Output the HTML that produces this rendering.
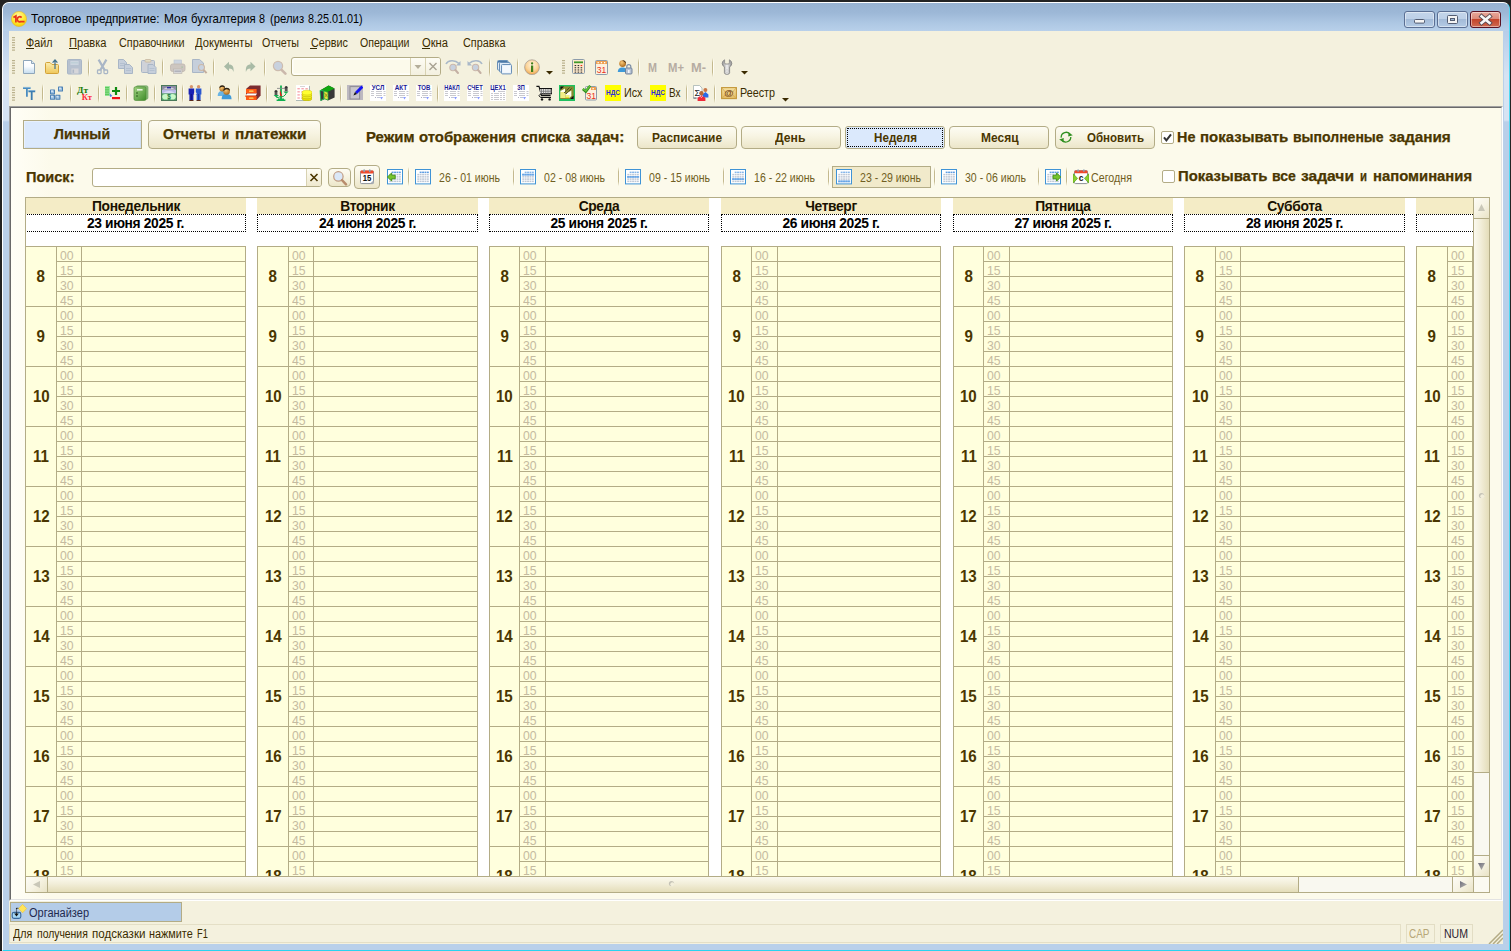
<!DOCTYPE html><html lang="ru"><head><meta charset="utf-8"><title>Торговое предприятие: Моя бухгалтерия 8</title><style>
*{box-sizing:border-box}
html,body{margin:0;padding:0}
body{width:1511px;height:951px;background:#232323;position:relative;overflow:hidden;font-family:"Liberation Sans",sans-serif;font-size:11px}
div,svg,span.t{position:absolute}
span.t{white-space:pre;transform-origin:0 0}
span.b{-webkit-text-stroke:.25px currentColor}
span.tw{position:absolute;left:0;top:0;font-size:0}
.sep{width:2px;height:20px;background:linear-gradient(90deg,#cfc8a4 0 1px,#fffef6 1px 2px);opacity:.9}
.grip{width:3px;background:repeating-linear-gradient(180deg,#b9b18c 0 1px,transparent 1px 2.5px)}
.btn{border:1px solid #b3ac86;border-radius:4px;background:linear-gradient(180deg,#fdfcf3 0%,#f7f4e2 45%,#ece6c9 100%)}
.hr{font-weight:bold;font-size:16.8px;color:#4a3600;text-align:center;line-height:60px;padding-top:1px}
.hr span{display:inline-block;transform:scaleX(.9)}
.mn{font-size:13.3px;color:#c5bba0;line-height:15px;padding-left:3px;padding-top:2px}
.mn span{display:inline-block;transform:scaleX(.92);transform-origin:0 50%}
.dn{letter-spacing:-.35px;font-weight:bold;font-size:13.8px;color:#1a1200;text-align:center;line-height:16px;padding-top:1px}
.dd{letter-spacing:-.35px;font-weight:bold;font-size:13.8px;color:#000;text-align:center;line-height:16px;padding-top:1px}
</style></head><body><div style="left:2px;top:2px;width:1508px;height:949px;background:#b9d0ea;border-radius:7px 7px 0 0;border:1px solid #fff;border-right-color:#4fd9f2;border-bottom-color:#29d3ef"></div><div style="left:3px;top:3px;width:1506px;height:28px;background:linear-gradient(180deg,#98b3d2 0%,#9db8d7 35%,#adc7e3 70%,#b8d0ea 100%);border-radius:6px 6px 0 0"></div><div style="left:3px;top:31px;width:6px;height:913px;background:linear-gradient(180deg,#b6cde8 0,#c4d7ee 20px,#d6e3f3 45px,#d6e3f3 89px,#b9cfe9 91px)"></div><div style="left:1503px;top:31px;width:6px;height:913px;background:linear-gradient(180deg,#b6cde8 0,#c4d7ee 20px,#d6e3f3 45px,#d6e3f3 89px,#b9cfe9 91px);border-left:1px solid #b9d0ea"></div><div style="left:9px;top:31px;width:1494px;height:913px;background:#f4f1de"></div><svg style="left:11px;top:11px;" width="16" height="16" viewBox="0 0 16 16"><defs><radialGradient id="g1c" cx="45%" cy="30%" r="75%"><stop offset="0" stop-color="#fff9a8"/><stop offset=".6" stop-color="#ffe62a"/><stop offset="1" stop-color="#f5c400"/></radialGradient></defs><circle cx="8" cy="8" r="7.6" fill="url(#g1c)" stroke="#e0b830" stroke-width=".6"/><path d="M2.4 6.4 L4.9 4.9 V11.4" fill="none" stroke="#e8321a" stroke-width="1.7"/><path d="M10.6 6.6 A2.5 2.5 0 1 0 9.6 10.6 H13.6" fill="none" stroke="#e8321a" stroke-width="1.7"/></svg><span class="tw"><span class="t" style="left:31.4px;top:13.33px;font-size:12.6px;line-height:12.6px;color:#000;transform:scaleX(0.9561);">Торговое</span> <span class="t" style="left:86px;top:13.33px;font-size:12.6px;line-height:12.6px;color:#000;transform:scaleX(0.9317);">предприятие:</span> <span class="t" style="left:163.8px;top:13.33px;font-size:12.6px;line-height:12.6px;color:#000;transform:scaleX(0.9481);">Моя</span> <span class="t" style="left:191px;top:13.33px;font-size:12.6px;line-height:12.6px;color:#000;transform:scaleX(0.9037);">бухгалтерия</span> <span class="t" style="left:259.2px;top:13.33px;font-size:12.6px;line-height:12.6px;color:#000;transform:scaleX(0.8552);">8</span> <span class="t" style="left:269.7px;top:13.33px;font-size:12.6px;line-height:12.6px;color:#000;transform:scaleX(0.8985);">(релиз</span> <span class="t" style="left:307.7px;top:13.33px;font-size:12.6px;line-height:12.6px;color:#000;transform:scaleX(0.8582);">8.25.01.01)</span></span><div style="left:1404px;top:11px;width:31px;height:17px;background:linear-gradient(180deg,#c3d5ea 0%,#bdd0e7 45%,#a3bbd8 50%,#b4cbe5 100%);border:1px solid #5b6f93;border-radius:3px;box-shadow:inset 0 0 0 1px rgba(255,255,255,.45)"></div><svg style="left:1404px;top:11px;" width="31" height="17" viewBox="0 0 31 17"><rect x="10.5" y="8.5" width="10" height="3.6" rx="1" fill="#f4f4f4" stroke="#535d72" stroke-width="1"/></svg><div style="left:1437px;top:11px;width:31px;height:17px;background:linear-gradient(180deg,#c3d5ea 0%,#bdd0e7 45%,#a3bbd8 50%,#b4cbe5 100%);border:1px solid #5b6f93;border-radius:3px;box-shadow:inset 0 0 0 1px rgba(255,255,255,.45)"></div><svg style="left:1437px;top:11px;" width="31" height="17" viewBox="0 0 31 17"><rect x="10.5" y="4.5" width="10" height="8" rx="1" fill="#f4f4f4" stroke="#535d72" stroke-width="1"/><rect x="13.5" y="7.5" width="4" height="2" fill="#9db7d6" stroke="#535d72" stroke-width="1"/></svg><div style="left:1470px;top:11px;width:31px;height:17px;background:linear-gradient(180deg,#e9a99b 0%,#dd8b7a 45%,#c4452b 50%,#cf6a50 100%);border:1px solid #5a1222;border-radius:3px;box-shadow:inset 0 0 0 1px rgba(255,255,255,.45)"></div><svg style="left:1470px;top:11px;" width="31" height="17" viewBox="0 0 31 17"><path d="M11.6 5.4 L19.6 12 M19.6 5.4 L11.6 12" stroke="#5a4a52" stroke-width="4.4" stroke-linecap="square"/><path d="M11.6 5.4 L19.6 12 M19.6 5.4 L11.6 12" stroke="#f8f8f8" stroke-width="2.6" stroke-linecap="square"/></svg><svg style="left:12px;top:37px;" width="3" height="14" viewBox="0 0 3 14"><rect x="0" y="0" width="3" height="1.2" fill="#b9b18c"/><rect x="0" y="2.5" width="3" height="1.2" fill="#b9b18c"/><rect x="0" y="5" width="3" height="1.2" fill="#b9b18c"/><rect x="0" y="7.5" width="3" height="1.2" fill="#b9b18c"/><rect x="0" y="10" width="3" height="1.2" fill="#b9b18c"/><rect x="0" y="12.5" width="3" height="1.2" fill="#b9b18c"/></svg><span class="t" style="left:25.5px;top:36.84px;font-size:12px;line-height:12px;color:#3a2c00;transform:scaleX(0.8978);">Файл</span><div style="left:26px;top:48px;width:8px;height:1px;background:#3a2c00"></div><span class="t" style="left:69px;top:36.84px;font-size:12px;line-height:12px;color:#3a2c00;transform:scaleX(0.9249);">Правка</span><div style="left:69px;top:48px;width:8px;height:1px;background:#3a2c00"></div><span class="t" style="left:118.5px;top:36.84px;font-size:12px;line-height:12px;color:#3a2c00;transform:scaleX(0.9009);">Справочники</span><span class="t" style="left:194.5px;top:36.84px;font-size:12px;line-height:12px;color:#3a2c00;transform:scaleX(0.9295);">Документы</span><span class="t" style="left:261.5px;top:36.84px;font-size:12px;line-height:12px;color:#3a2c00;transform:scaleX(0.8919);">Отчеты</span><span class="t" style="left:310.5px;top:36.84px;font-size:12px;line-height:12px;color:#3a2c00;transform:scaleX(0.9004);">Сервис</span><div style="left:310px;top:48px;width:7px;height:1px;background:#3a2c00"></div><span class="t" style="left:360px;top:36.84px;font-size:12px;line-height:12px;color:#3a2c00;transform:scaleX(0.8817);">Операции</span><span class="t" style="left:421.5px;top:36.84px;font-size:12px;line-height:12px;color:#3a2c00;transform:scaleX(0.9322);">Окна</span><div style="left:422px;top:48px;width:8px;height:1px;background:#3a2c00"></div><span class="t" style="left:462.5px;top:36.84px;font-size:12px;line-height:12px;color:#3a2c00;transform:scaleX(0.9028);">Справка</span><svg style="left:12px;top:60px;" width="3" height="14" viewBox="0 0 3 14"><rect x="0" y="0" width="3" height="1.2" fill="#b9b18c"/><rect x="0" y="2.5" width="3" height="1.2" fill="#b9b18c"/><rect x="0" y="5" width="3" height="1.2" fill="#b9b18c"/><rect x="0" y="7.5" width="3" height="1.2" fill="#b9b18c"/><rect x="0" y="10" width="3" height="1.2" fill="#b9b18c"/><rect x="0" y="12.5" width="3" height="1.2" fill="#b9b18c"/></svg><svg style="left:12px;top:87px;" width="3" height="14" viewBox="0 0 3 14"><rect x="0" y="0" width="3" height="1.2" fill="#b9b18c"/><rect x="0" y="2.5" width="3" height="1.2" fill="#b9b18c"/><rect x="0" y="5" width="3" height="1.2" fill="#b9b18c"/><rect x="0" y="7.5" width="3" height="1.2" fill="#b9b18c"/><rect x="0" y="10" width="3" height="1.2" fill="#b9b18c"/><rect x="0" y="12.5" width="3" height="1.2" fill="#b9b18c"/></svg><svg style="left:562px;top:60px;" width="3" height="14" viewBox="0 0 3 14"><rect x="0" y="0" width="3" height="1.2" fill="#b9b18c"/><rect x="0" y="2.5" width="3" height="1.2" fill="#b9b18c"/><rect x="0" y="5" width="3" height="1.2" fill="#b9b18c"/><rect x="0" y="7.5" width="3" height="1.2" fill="#b9b18c"/><rect x="0" y="10" width="3" height="1.2" fill="#b9b18c"/><rect x="0" y="12.5" width="3" height="1.2" fill="#b9b18c"/></svg><div style="left:88px;top:58px;width:1px;height:19px;background:linear-gradient(180deg,rgba(190,180,140,0),#c4b98e 25%,#c4b98e 75%,rgba(190,180,140,0))"></div><div style="left:89px;top:58px;width:1px;height:19px;background:linear-gradient(180deg,rgba(255,255,255,0),#fffdf4 25%,#fffdf4 75%,rgba(255,255,255,0))"></div><div style="left:162px;top:58px;width:1px;height:19px;background:linear-gradient(180deg,rgba(190,180,140,0),#c4b98e 25%,#c4b98e 75%,rgba(190,180,140,0))"></div><div style="left:163px;top:58px;width:1px;height:19px;background:linear-gradient(180deg,rgba(255,255,255,0),#fffdf4 25%,#fffdf4 75%,rgba(255,255,255,0))"></div><div style="left:213px;top:58px;width:1px;height:19px;background:linear-gradient(180deg,rgba(190,180,140,0),#c4b98e 25%,#c4b98e 75%,rgba(190,180,140,0))"></div><div style="left:214px;top:58px;width:1px;height:19px;background:linear-gradient(180deg,rgba(255,255,255,0),#fffdf4 25%,#fffdf4 75%,rgba(255,255,255,0))"></div><div style="left:264px;top:58px;width:1px;height:19px;background:linear-gradient(180deg,rgba(190,180,140,0),#c4b98e 25%,#c4b98e 75%,rgba(190,180,140,0))"></div><div style="left:265px;top:58px;width:1px;height:19px;background:linear-gradient(180deg,rgba(255,255,255,0),#fffdf4 25%,#fffdf4 75%,rgba(255,255,255,0))"></div><div style="left:489px;top:58px;width:1px;height:19px;background:linear-gradient(180deg,rgba(190,180,140,0),#c4b98e 25%,#c4b98e 75%,rgba(190,180,140,0))"></div><div style="left:490px;top:58px;width:1px;height:19px;background:linear-gradient(180deg,rgba(255,255,255,0),#fffdf4 25%,#fffdf4 75%,rgba(255,255,255,0))"></div><div style="left:517px;top:58px;width:1px;height:19px;background:linear-gradient(180deg,rgba(190,180,140,0),#c4b98e 25%,#c4b98e 75%,rgba(190,180,140,0))"></div><div style="left:518px;top:58px;width:1px;height:19px;background:linear-gradient(180deg,rgba(255,255,255,0),#fffdf4 25%,#fffdf4 75%,rgba(255,255,255,0))"></div><div style="left:638px;top:58px;width:1px;height:19px;background:linear-gradient(180deg,rgba(190,180,140,0),#c4b98e 25%,#c4b98e 75%,rgba(190,180,140,0))"></div><div style="left:639px;top:58px;width:1px;height:19px;background:linear-gradient(180deg,rgba(255,255,255,0),#fffdf4 25%,#fffdf4 75%,rgba(255,255,255,0))"></div><div style="left:712px;top:58px;width:1px;height:19px;background:linear-gradient(180deg,rgba(190,180,140,0),#c4b98e 25%,#c4b98e 75%,rgba(190,180,140,0))"></div><div style="left:713px;top:58px;width:1px;height:19px;background:linear-gradient(180deg,rgba(255,255,255,0),#fffdf4 25%,#fffdf4 75%,rgba(255,255,255,0))"></div><div style="left:42px;top:84px;width:1px;height:19px;background:linear-gradient(180deg,rgba(190,180,140,0),#c4b98e 25%,#c4b98e 75%,rgba(190,180,140,0))"></div><div style="left:43px;top:84px;width:1px;height:19px;background:linear-gradient(180deg,rgba(255,255,255,0),#fffdf4 25%,#fffdf4 75%,rgba(255,255,255,0))"></div><div style="left:70px;top:84px;width:1px;height:19px;background:linear-gradient(180deg,rgba(190,180,140,0),#c4b98e 25%,#c4b98e 75%,rgba(190,180,140,0))"></div><div style="left:71px;top:84px;width:1px;height:19px;background:linear-gradient(180deg,rgba(255,255,255,0),#fffdf4 25%,#fffdf4 75%,rgba(255,255,255,0))"></div><div style="left:98px;top:84px;width:1px;height:19px;background:linear-gradient(180deg,rgba(190,180,140,0),#c4b98e 25%,#c4b98e 75%,rgba(190,180,140,0))"></div><div style="left:99px;top:84px;width:1px;height:19px;background:linear-gradient(180deg,rgba(255,255,255,0),#fffdf4 25%,#fffdf4 75%,rgba(255,255,255,0))"></div><div style="left:126px;top:84px;width:1px;height:19px;background:linear-gradient(180deg,rgba(190,180,140,0),#c4b98e 25%,#c4b98e 75%,rgba(190,180,140,0))"></div><div style="left:127px;top:84px;width:1px;height:19px;background:linear-gradient(180deg,rgba(255,255,255,0),#fffdf4 25%,#fffdf4 75%,rgba(255,255,255,0))"></div><div style="left:154px;top:84px;width:1px;height:19px;background:linear-gradient(180deg,rgba(190,180,140,0),#c4b98e 25%,#c4b98e 75%,rgba(190,180,140,0))"></div><div style="left:155px;top:84px;width:1px;height:19px;background:linear-gradient(180deg,rgba(255,255,255,0),#fffdf4 25%,#fffdf4 75%,rgba(255,255,255,0))"></div><div style="left:182px;top:84px;width:1px;height:19px;background:linear-gradient(180deg,rgba(190,180,140,0),#c4b98e 25%,#c4b98e 75%,rgba(190,180,140,0))"></div><div style="left:183px;top:84px;width:1px;height:19px;background:linear-gradient(180deg,rgba(255,255,255,0),#fffdf4 25%,#fffdf4 75%,rgba(255,255,255,0))"></div><div style="left:210px;top:84px;width:1px;height:19px;background:linear-gradient(180deg,rgba(190,180,140,0),#c4b98e 25%,#c4b98e 75%,rgba(190,180,140,0))"></div><div style="left:211px;top:84px;width:1px;height:19px;background:linear-gradient(180deg,rgba(255,255,255,0),#fffdf4 25%,#fffdf4 75%,rgba(255,255,255,0))"></div><div style="left:238px;top:84px;width:1px;height:19px;background:linear-gradient(180deg,rgba(190,180,140,0),#c4b98e 25%,#c4b98e 75%,rgba(190,180,140,0))"></div><div style="left:239px;top:84px;width:1px;height:19px;background:linear-gradient(180deg,rgba(255,255,255,0),#fffdf4 25%,#fffdf4 75%,rgba(255,255,255,0))"></div><div style="left:266px;top:84px;width:1px;height:19px;background:linear-gradient(180deg,rgba(190,180,140,0),#c4b98e 25%,#c4b98e 75%,rgba(190,180,140,0))"></div><div style="left:267px;top:84px;width:1px;height:19px;background:linear-gradient(180deg,rgba(255,255,255,0),#fffdf4 25%,#fffdf4 75%,rgba(255,255,255,0))"></div><div style="left:340px;top:84px;width:1px;height:19px;background:linear-gradient(180deg,rgba(190,180,140,0),#c4b98e 25%,#c4b98e 75%,rgba(190,180,140,0))"></div><div style="left:341px;top:84px;width:1px;height:19px;background:linear-gradient(180deg,rgba(255,255,255,0),#fffdf4 25%,#fffdf4 75%,rgba(255,255,255,0))"></div><div style="left:437px;top:84px;width:1px;height:19px;background:linear-gradient(180deg,rgba(190,180,140,0),#c4b98e 25%,#c4b98e 75%,rgba(190,180,140,0))"></div><div style="left:438px;top:84px;width:1px;height:19px;background:linear-gradient(180deg,rgba(255,255,255,0),#fffdf4 25%,#fffdf4 75%,rgba(255,255,255,0))"></div><div style="left:686px;top:84px;width:1px;height:19px;background:linear-gradient(180deg,rgba(190,180,140,0),#c4b98e 25%,#c4b98e 75%,rgba(190,180,140,0))"></div><div style="left:687px;top:84px;width:1px;height:19px;background:linear-gradient(180deg,rgba(255,255,255,0),#fffdf4 25%,#fffdf4 75%,rgba(255,255,255,0))"></div><div style="left:714px;top:84px;width:1px;height:19px;background:linear-gradient(180deg,rgba(190,180,140,0),#c4b98e 25%,#c4b98e 75%,rgba(190,180,140,0))"></div><div style="left:715px;top:84px;width:1px;height:19px;background:linear-gradient(180deg,rgba(255,255,255,0),#fffdf4 25%,#fffdf4 75%,rgba(255,255,255,0))"></div><svg style="left:22px;top:59px;" width="16" height="16" viewBox="0 0 16 16"><defs><linearGradient id="gd" x1="0" y1="0" x2="0" y2="1"><stop offset="0" stop-color="#fff"/><stop offset=".45" stop-color="#fafcfe"/><stop offset="1" stop-color="#c4dcef"/></linearGradient></defs><path d="M1.5 1.5 H9.5 L12.5 4.5 V14.5 H1.5 Z" fill="url(#gd)" stroke="#8fa6ba"/><path d="M9.5 1.5 V4.5 H12.5" fill="#dde9f3" stroke="#8fa6ba"/></svg><svg style="left:44px;top:59px;" width="16" height="16" viewBox="0 0 16 16"><defs><linearGradient id="gf" x1="0" y1="0" x2="0" y2="1"><stop offset="0" stop-color="#fbeeb0"/><stop offset="1" stop-color="#efc75a"/></linearGradient></defs><path d="M1.5 4.5 Q1.5 3.5 2.5 3.5 H6 L8 5.5 H13.5 Q14.5 5.5 14.5 6.5 V13.5 Q14.5 14.5 13.5 14.5 H2.5 Q1.5 14.5 1.5 13.5 Z" fill="url(#gf)" stroke="#d3a238"/><path d="M11 10 V1.5 M8.6 3.6 L11 1 L13.4 3.6" fill="none" stroke="#3f6f8c" stroke-width="1.2"/></svg><svg style="left:67px;top:59px;" width="16" height="16" viewBox="0 0 16 16"><rect x=".5" y=".5" width="14" height="14.5" rx="1" fill="#b7c1cf" stroke="#a9b6c6"/><rect x="3" y="1.5" width="9" height="5" fill="#ccd5df" stroke="#b0bccb" stroke-width=".6"/><rect x="4" y="3" width="7" height="1.4" fill="#bfd0d8"/><rect x="4.5" y="9.5" width="7" height="5" fill="#d6d6da"/><rect x="5.5" y="10.5" width="1.6" height="3.4" fill="#aeb7c6"/></svg><svg style="left:96px;top:59px;" width="16" height="16" viewBox="0 0 16 16"><path d="M2.6 0.6 L9.2 12 M10.4 0.6 L3.8 12" stroke="#a9b6c6" stroke-width="2.2"/><rect x="1.5" y="11" width="3.6" height="3.6" rx=".8" fill="#f4f1de" stroke="#a9b6c6" stroke-width="1.3"/><rect x="8" y="11" width="3.6" height="3.6" rx=".8" fill="#f4f1de" stroke="#a9b6c6" stroke-width="1.3"/></svg><svg style="left:118px;top:59px;" width="16" height="16" viewBox="0 0 16 16"><path d="M0.5 0.5 H5.5 L8.5 3.5 V9.5 H0.5 Z" fill="#c6cfdb" stroke="#a9b6c6"/><rect x="2" y="4" width="5" height="1" fill="#b4c0d0"/><rect x="2" y="6" width="5" height="1" fill="#b4c0d0"/><path d="M6.5 5.5 H11.5 L14.5 8.5 V14.5 H6.5 Z" fill="#c6cfdb" stroke="#a9b6c6"/><rect x="8" y="9" width="5" height="1" fill="#b4c0d0"/><rect x="8" y="11" width="5" height="1" fill="#b4c0d0"/></svg><svg style="left:141px;top:59px;" width="16" height="16" viewBox="0 0 16 16"><rect x=".5" y="1.5" width="13" height="12" rx="1" fill="#cfd2d8" stroke="#a9b6c6"/><rect x="4" y=".5" width="6" height="2.6" rx="1" fill="#e2dcc4" stroke="#c8b8a0" stroke-width=".8"/><path d="M7.0 5.5 H12.0 L15.0 8.5 V14.5 H7.0 Z" fill="#c6cfdb" stroke="#a9b6c6"/><rect x="8.5" y="9" width="5" height="1" fill="#b4c0d0"/><rect x="8.5" y="11" width="5" height="1" fill="#b4c0d0"/></svg><svg style="left:170px;top:59px;" width="16" height="16" viewBox="0 0 16 16"><rect x="4" y="1" width="7.5" height="5" fill="#ccd4df" stroke="#b9c3d0" stroke-width=".6"/><rect x=".5" y="5" width="14.5" height="7.5" rx="2" fill="#cdc6c0" stroke="#bfb6ae" stroke-width=".8"/><rect x="3.5" y="10" width="8.5" height="4.5" fill="#d6d6d8" stroke="#b8b2ac" stroke-width=".6"/><rect x="4.5" y="11.5" width="6.5" height="1.4" fill="#aeb0b8"/><rect x="11.5" y="7.5" width="1.2" height="1.2" fill="#9ac09a"/></svg><svg style="left:192px;top:59px;" width="16" height="16" viewBox="0 0 16 16"><path d="M.5 .5 H7.5 L11.5 4 V13.5 H.5 Z" fill="#c6cfdb" stroke="#a9b6c6"/><circle cx="9.5" cy="8.5" r="3" fill="#c9d3e0" stroke="#cdb8a4" stroke-width="1.1"/><path d="M11.6 10.8 L14.6 14.2" stroke="#c4ae9e" stroke-width="2"/></svg><svg style="left:223px;top:59px;" width="16" height="16" viewBox="0 0 16 16"><path d="M1 7.5 L6 2.8 V5.6 C9.5 5.6 11 8 10.6 13 C9.8 10.4 8.8 9.4 6 9.4 V12.2 Z" fill="#a9bba6"/></svg><svg style="left:244px;top:59px;" width="16" height="16" viewBox="0 0 16 16"><path d="M11.5 7.5 L6.5 2.8 V5.6 C3 5.6 1.5 8 1.9 13 C2.7 10.4 3.7 9.4 6.5 9.4 V12.2 Z" fill="#a9bba6"/></svg><svg style="left:272px;top:59px;" width="16" height="16" viewBox="0 0 16 16"><circle cx="6" cy="7" r="4.6" fill="#c8d1de" stroke="#cdbcae" stroke-width="1.2"/><path d="M9.6 10.8 L13.4 14.6" stroke="#cbb8ac" stroke-width="2.6" stroke-linecap="round"/></svg><div style="left:291px;top:57px;width:150px;height:19px;background:#fcfaeb;border:1px solid #b3ac86;border-radius:3px;box-shadow:inset 0 0 0 1.5px #fffffb"></div><div style="left:411px;top:58px;width:29px;height:17px;background:linear-gradient(180deg,#fdfcf4,#f3f0df);border-radius:0 2px 2px 0"></div><div style="left:410px;top:58px;width:1px;height:17px;background:#d8d2b2"></div><div style="left:425px;top:58px;width:1px;height:17px;background:#d8d2b2"></div><svg style="left:411px;top:58px;" width="14" height="17" viewBox="0 0 14 17"><path d="M3.5 7 H10.5 L7 11 Z" fill="#b4ae9a"/></svg><svg style="left:426px;top:58px;" width="14" height="17" viewBox="0 0 14 17"><path d="M3.5 5 L10.5 12 M10.5 5 L3.5 12" stroke="#a8a292" stroke-width="1.4"/></svg><svg style="left:445px;top:59px;" width="16" height="16" viewBox="0 0 16 16"><path d="M1 5 C3 1 10 0.5 14 4.5" fill="none" stroke="#a9b8c8" stroke-width="1.6"/><path d="M15.5 2 V6.5 H11 Z" fill="#a9b8c8"/><circle cx="8" cy="8.5" r="3.2" fill="#c8d1de" stroke="#cbb8ac" stroke-width="1.1"/><path d="M10.4 11 L13 14" stroke="#c4b0a4" stroke-width="2" stroke-linecap="round"/></svg><svg style="left:467px;top:59px;" width="16" height="16" viewBox="0 0 16 16"><path d="M15 5 C13 1 6 0.5 2 4.5" fill="none" stroke="#a9b8c8" stroke-width="1.6"/><path d="M.5 2 V6.5 H5 Z" fill="#a9b8c8"/><circle cx="8.5" cy="8.5" r="3.2" fill="#c8d1de" stroke="#cbb8ac" stroke-width="1.1"/><path d="M11 11 L13.6 14" stroke="#c4b0a4" stroke-width="2" stroke-linecap="round"/></svg><svg style="left:496px;top:59px;" width="16" height="16" viewBox="0 0 16 16"><rect x="1.5" y="1.5" width="10.6" height="9.6" rx="1" fill="#dfeaf6" stroke="#6a90b8"/><rect x="2" y="2" width="9.6" height="1.6" fill="#4a78a6"/><rect x="3.5" y="3.5" width="10.6" height="9.6" rx="1" fill="#dfeaf6" stroke="#6a90b8"/><rect x="5.5" y="5.5" width="10" height="9.4" rx="1" fill="#e6f0fa" stroke="#6a90b8"/><rect x="6.6" y="7" width="7.8" height="6.6" fill="#f4f8fd"/></svg><svg style="left:524px;top:59px;" width="16" height="16" viewBox="0 0 16 16"><defs><radialGradient id="gi" cx="50%" cy="35%" r="65%"><stop offset="0" stop-color="#fff3dc"/><stop offset=".6" stop-color="#fbd49a"/><stop offset="1" stop-color="#f0a648"/></radialGradient></defs><circle cx="8" cy="8.2" r="7.4" fill="url(#gi)" stroke="#a8a098" stroke-width=".8"/><rect x="7" y="6.5" width="2.2" height="6.5" fill="#3f7f1c"/><rect x="7" y="3.2" width="2.2" height="2.2" rx="1" fill="#3f7f1c"/></svg><svg style="left:546px;top:71px;" width="7" height="4" viewBox="0 0 7 4"><path d="M0 0 H7 L3.5 3.6 Z" fill="#3a2a00"/></svg><svg style="left:572px;top:59px;" width="16" height="16" viewBox="0 0 16 16"><rect x=".5" y=".5" width="12" height="14" rx="1" fill="#fde9cc" stroke="#8c9cab"/><rect x="2" y="2.4" width="9" height="1.8" fill="#3f9a2a"/><rect x="2.6" y="6.0" width="1.6" height="1.1" fill="#333"/><rect x="5.6" y="6.0" width="1.6" height="1.1" fill="#333"/><rect x="8.6" y="6.0" width="1.6" height="1.1" fill="#e8301a"/><rect x="2.6" y="8.2" width="1.6" height="1.1" fill="#333"/><rect x="5.6" y="8.2" width="1.6" height="1.1" fill="#333"/><rect x="8.6" y="8.2" width="1.6" height="1.1" fill="#333"/><rect x="2.6" y="10.4" width="1.6" height="1.1" fill="#333"/><rect x="5.6" y="10.4" width="1.6" height="1.1" fill="#333"/><rect x="8.6" y="10.4" width="1.6" height="1.1" fill="#333"/><rect x="2.6" y="12.600000000000001" width="1.6" height="1.1" fill="#333"/><rect x="5.6" y="12.600000000000001" width="1.6" height="1.1" fill="#333"/><rect x="8.6" y="12.600000000000001" width="1.6" height="1.1" fill="#333"/></svg><svg style="left:594px;top:59px;" width="16" height="16" viewBox="0 0 16 16"><rect x="1.5" y="1.5" width="12" height="14" rx="1" fill="#fdf1de" stroke="#8c9cab"/><rect x="2" y="2" width="11" height="3" fill="#f0a050"/><rect x="3.5" y="3" width="1.3" height="1.3" fill="#fff"/><rect x="6.8" y="3" width="1.3" height="1.3" fill="#fff"/><rect x="10" y="3" width="1.3" height="1.3" fill="#fff"/><text x="7.6" y="14" font-family="Liberation Sans, sans-serif" font-size="9.5" text-anchor="middle" fill="#e8301a" textLength="9.5" lengthAdjust="spacingAndGlyphs">31</text></svg><svg style="left:617px;top:59px;" width="16" height="16" viewBox="0 0 16 16"><defs><radialGradient id="gh" cx="40%" cy="35%" r="70%"><stop offset="0" stop-color="#f8c878"/><stop offset="1" stop-color="#a86414"/></radialGradient></defs><circle cx="5.6" cy="4.6" r="3.4" fill="url(#gh)"/><path d="M5.2 1.2 A3.4 3.4 0 0 1 9 4.4 L7.6 3 Z" fill="#3a2a18"/><path d="M.8 13 C.8 9.5 3 8.4 5.6 8.4 C8.2 8.4 10 9.5 10 13 Z" fill="#3f9ad8"/><rect x="8.5" y="9" width="6.5" height="6" rx="1" fill="#b8c4d4" stroke="#6a7c94" stroke-width=".9"/><path d="M9.8 9 V7.6 A2 2 0 0 1 13.8 7.6 V9" fill="none" stroke="#7a8ca4" stroke-width="1.2"/><rect x="11" y="11" width="1.6" height="3" fill="#f4f6fa"/></svg><span class="t" style="left:648px;top:61.00px;font-size:13px;line-height:13px;color:#b6aca2;font-weight:bold;transform:scaleX(0.8300);">M</span><span class="t" style="left:668px;top:61.00px;font-size:13px;line-height:13px;color:#b6aca2;font-weight:bold;transform:scaleX(0.8685);">M+</span><span class="t" style="left:691px;top:61.00px;font-size:13px;line-height:13px;color:#b6aca2;font-weight:bold;transform:scaleX(0.9887);">M-</span><svg style="left:719px;top:59px;" width="16" height="16" viewBox="0 0 16 16"><defs><linearGradient id="gw" x1="0" y1="0" x2="1" y2="0"><stop offset="0" stop-color="#8e8e8e"/><stop offset=".5" stop-color="#f2f2f2"/><stop offset="1" stop-color="#8a8a8a"/></linearGradient></defs><path d="M5.6 .8 V3.6 Q5.6 5 6.8 5 H9.2 Q10.4 5 10.4 3.6 V.8 Q12.8 2 12.8 4.4 Q12.8 6.8 10.6 7.8 V13.8 Q10.6 15.4 8 15.4 Q5.4 15.4 5.4 13.8 V7.8 Q3.2 6.8 3.2 4.4 Q3.2 2 5.6 .8 Z" fill="url(#gw)" stroke="#808080" stroke-width=".8"/><rect x="7.2" y="10.6" width="1.6" height="3.2" rx=".8" fill="#fff" stroke="#9a9a9a" stroke-width=".4"/></svg><svg style="left:741px;top:71px;" width="7" height="4" viewBox="0 0 7 4"><path d="M0 0 H7 L3.5 3.6 Z" fill="#3a2a00"/></svg><svg style="left:22px;top:85px;" width="16" height="16" viewBox="0 0 16 16"><path d="M1 2.4 H8.6 V4 H5.8 V11.8 H4 V4 H1 Z" fill="#4a8cc0"/><path d="M6.4 5.6 H13.2 V7.2 H10.6 V15 H8.8 V7.2 H6.4 Z" fill="#3a7cb0"/><path d="M1 2.4 H8.6 M6.4 5.6 H13.2" stroke="#7ab0d8" stroke-width=".8"/></svg><svg style="left:49px;top:85px;" width="16" height="16" viewBox="0 0 16 16"><rect x="9" y="1.6" width="5" height="5" rx=".6" fill="#4a7fb4"/><rect x="10" y="2.6" width="3" height="3" fill="#9cc0e0"/><rect x="10" y="2.6" width="2" height="1.6" fill="#cfe2f4"/><rect x="1" y="4.4" width="5" height="5" rx=".6" fill="#4a7fb4"/><rect x="2" y="5.4" width="3" height="3" fill="#9cc0e0"/><rect x="2" y="5.4" width="2" height="1.6" fill="#cfe2f4"/><rect x="1" y="9.8" width="5" height="5" rx=".6" fill="#4a7fb4"/><rect x="2" y="10.8" width="3" height="3" fill="#9cc0e0"/><rect x="2" y="10.8" width="2" height="1.6" fill="#cfe2f4"/><rect x="6.4" y="9.8" width="5" height="5" rx=".6" fill="#4a7fb4"/><rect x="7.4" y="10.8" width="3" height="3" fill="#9cc0e0"/><rect x="7.4" y="10.8" width="2" height="1.6" fill="#cfe2f4"/></svg><svg style="left:76px;top:85px;" width="16" height="16" viewBox="0 0 16 16"><text x="1" y="7.6" font-family="Liberation Serif, serif" font-size="9" font-weight="bold" fill="#1a7a0a" textLength="11" lengthAdjust="spacingAndGlyphs">Дт</text><text x="5.8" y="15" font-family="Liberation Serif, serif" font-size="9" font-weight="bold" fill="#ff2a3a" textLength="10.2" lengthAdjust="spacingAndGlyphs">Кт</text></svg><svg style="left:104px;top:85px;" width="16" height="16" viewBox="0 0 16 16"><rect x="1" y="1" width="5" height="10" fill="#9fe89f"/><path d="M2 2 V11 M4 2 V11" stroke="#18a818" stroke-width="1" stroke-dasharray="1.4 .8"/><path d="M5.6 8 L8.4 11 L6 12 Z" fill="#4a7ae0"/><path d="M8 6 H16 M12 2 V10" stroke="#108a10" stroke-width="2.2"/><rect x="8" y="12" width="8" height="2.2" fill="#f0101a"/></svg><svg style="left:133px;top:85px;" width="16" height="16" viewBox="0 0 16 16"><defs><linearGradient id="gb" x1="0" y1="0" x2="1" y2="1"><stop offset="0" stop-color="#a4d484"/><stop offset="1" stop-color="#3f8c2a"/></linearGradient></defs><rect x="3" y=".8" width="12" height="13.4" rx="1.5" fill="#8cbc7c" stroke="#6a9c5a" stroke-width=".6"/><rect x="1" y="1.8" width="12" height="13.6" rx="1.5" fill="url(#gb)" stroke="#4a8a34" stroke-width=".7"/><rect x="4" y="4" width="5.6" height="1.6" fill="#e8f4e0"/><rect x="3" y="7.5" width="2" height="1" fill="#2a5a1a"/><rect x="3" y="10.5" width="2" height="1" fill="#2a5a1a"/></svg><svg style="left:161px;top:85px;" width="16" height="16" viewBox="0 0 16 16"><rect x=".5" y=".5" width="15" height="15" fill="#5a9a6a" stroke="#4a7a5a"/><rect x="1" y="1" width="14" height="4" fill="#8c8ca4"/><path d="M1.5 4.6 Q8 0 14.5 4.6 Z" fill="#d0d0e0"/><rect x="6" y="2" width="4" height="1.4" fill="#2a2aa0"/><rect x="1" y="5" width="14" height="3.4" fill="#b8b8e8"/><path d="M1.5 8.2 Q8 3.8 14.5 8.2 Z" fill="#d8d8f8"/><rect x="1" y="8.6" width="14" height="6.4" fill="#58a870"/><ellipse cx="4.6" cy="11.8" rx="3.4" ry="2.8" fill="#c8f8c8"/><ellipse cx="11.4" cy="11.8" rx="3.4" ry="2.8" fill="#c8f8c8"/><text x="8" y="14.4" font-family="Liberation Sans, sans-serif" font-size="6.5" font-weight="bold" text-anchor="middle" fill="#2a7a4a">$</text></svg><svg style="left:188px;top:85px;" width="16" height="16" viewBox="0 0 16 16"><circle cx="3.4" cy="1.8" r="1.7" fill="#d8956a"/><path d="M0.6 3.6 H6.2 V9.4 H5.4 V15.4 H1.4 V9.4 H0.6 Z" fill="#1a22b4"/><path d="M3.3 9 V15.4" stroke="#10106a" stroke-width=".7"/><rect x="1.4" y="15" width="4" height="1" fill="#5a2a1a"/><circle cx="10.6" cy="1.8" r="1.7" fill="#d8956a"/><path d="M7.8 3.6 H13.4 V9.4 H12.600000000000001 V15.4 H8.6 V9.4 H7.8 Z" fill="#2a58d0"/><path d="M10.5 9 V15.4" stroke="#1a2a90" stroke-width=".7"/><rect x="8.6" y="15" width="4" height="1" fill="#5a2a1a"/><path d="M5.6 8.4 L7.6 7 L9 8.6 L7 9.6 Z" fill="#f4ece4"/></svg><svg style="left:217px;top:85px;" width="16" height="16" viewBox="0 0 16 16"><path d="M0.7000000000000002 11.1 C0.7000000000000002 6.9 2.9000000000000004 5.9 5.2 5.9 C7.5 5.9 9.7 6.9 9.7 11.1 Z" fill="#6ab4e4"/><circle cx="5.2" cy="3.6" r="2.9" fill="url(#gh)"/><path d="M2.3000000000000003 3.2 A2.9 2.9 0 0 1 8.1 3.2 L7.1 2.2 Q5.2 1.1 3.3000000000000003 2.6 Z" fill="#2e2216"/><path d="M4.699999999999999 14.299999999999999 C4.699999999999999 10.1 6.8999999999999995 9.1 9.6 9.1 C12.299999999999999 9.1 14.499999999999998 10.1 14.499999999999998 14.299999999999999 Z" fill="#3f9ad8"/><circle cx="9.6" cy="6.4" r="3.3" fill="url(#gh)"/><path d="M6.3 6.0 A3.3 3.3 0 0 1 12.899999999999999 6.0 L11.899999999999999 5.0 Q9.6 3.5000000000000004 7.3 5.4 Z" fill="#2e2216"/></svg><svg style="left:245px;top:85px;" width="16" height="16" viewBox="0 0 16 16"><path d="M1 4 L5 .6 H15.6 V10.6 L11.6 15 H1 Z" fill="#7c2c30"/><rect x="1" y="4" width="10.6" height="4.4" fill="#ff5a14"/><rect x="1" y="11" width="10.6" height="4" fill="#ff5a14"/><path d="M0 10.8 L2.4 8.4 H12 L10.6 10.8 Z" fill="#fff"/><rect x="0" y="10.6" width="11" height="1" fill="#e04a10"/><rect x="4" y="5.6" width="4.6" height="1.2" rx=".6" fill="#ffe060"/><rect x="4" y="12.6" width="4.6" height="1.2" rx=".6" fill="#ffe060"/></svg><svg style="left:273px;top:85px;" width="16" height="16" viewBox="0 0 16 16"><path d="M8 .6 V14 M3.6 15.4 H12.4 M5 14.4 H11" stroke="#10b050" stroke-width="1.8"/><path d="M4 3.4 H13" stroke="#8a8a8a" stroke-width=".9"/><path d="M7 5 L9 11 L8 13 L6.8 9 Z" fill="#f0181a"/><path d="M0.6 10 H6 L3.4 12.6 Z M10.4 6.4 H15.6 L13 9 Z" fill="#10b050"/><path d="M3.4 12.6 Q6 13 8 11 M13 9 Q11 12 8 12" fill="none" stroke="#10b050" stroke-width="1"/><circle cx="3" cy="6.4" r="1.5" fill="#333"/><rect x="1.6" y="7.4" width="2.8" height="2.6" fill="#555"/><circle cx="13.2" cy="2.4" r="1.5" fill="#333"/><rect x="11.8" y="3.4" width="2.8" height="3" fill="#555"/></svg><svg style="left:296px;top:85px;" width="16" height="16" viewBox="0 0 16 16"><rect x="0" y="0" width="13" height="15.4" fill="#fff"/><rect x="13" y="1" width=".8" height="14" fill="#9aa"/><rect x="0" y="15" width="13" height=".8" fill="#9aa"/><rect x="4" y="1" width="5" height=".8" fill="#ccc"/><rect x="1.4" y="3.0" width="2.4" height="1.4" fill="#f8a8b0"/><rect x="5.4" y="3.0" width="2.4" height="1.4" fill="#f8a8b0"/><rect x="9.4" y="3.0" width="2.4" height="1.4" fill="#f8a8b0"/><rect x="1.4" y="6.1" width="2.4" height="1.4" fill="#f8a8b0"/><rect x="5.4" y="6.1" width="2.4" height="1.4" fill="#f8a8b0"/><rect x="9.4" y="6.1" width="2.4" height="1.4" fill="#f8a8b0"/><rect x="1.4" y="9.2" width="2.4" height="1.4" fill="#f8a8b0"/><rect x="5.4" y="9.2" width="2.4" height="1.4" fill="#f8a8b0"/><rect x="9.4" y="9.2" width="2.4" height="1.4" fill="#f8a8b0"/><rect x="1.4" y="12.3" width="2.4" height="1.4" fill="#f8a8b0"/><rect x="5.4" y="12.3" width="2.4" height="1.4" fill="#f8a8b0"/><rect x="9.4" y="12.3" width="2.4" height="1.4" fill="#f8a8b0"/><ellipse cx="11" cy="13.4" rx="5" ry="2.4" fill="#e8e000" stroke="#b0a800" stroke-width=".5"/><ellipse cx="11" cy="11.4" rx="5" ry="2.4" fill="#f4f020" stroke="#b0a800" stroke-width=".5"/><ellipse cx="11" cy="9.4" rx="5" ry="2.4" fill="#f4f020" stroke="#b0a800" stroke-width=".5"/><ellipse cx="11" cy="7.6" rx="5" ry="2.4" fill="#ffff30" stroke="#c8c000" stroke-width=".5"/></svg><svg style="left:319px;top:85px;" width="16" height="16" viewBox="0 0 16 16"><path d="M1 5.4 L9.6 .4 L15.6 3.6 V12.6 L9 15.6 L6 14 L1.6 16 Z" fill="#383838"/><path d="M1 5.4 L9.6 .4 L15.6 3.6 L8.4 7 L5 5.6 Z" fill="#10a810"/><path d="M1 5.4 L1.8 15.6 L5 13.6 V6 Z" fill="#383838" stroke="#20d060" stroke-width=".8"/><path d="M5 6 L9 7.4 V15 L5 13.6 Z" fill="#e8e040"/><path d="M5 6 L9 7.4 V15 L5 13.6 Z" fill="none" stroke="#20c040" stroke-width=".7"/><path d="M5.6 8 L8.4 12 M8.4 8.6 L5.6 12.4" stroke="#8a7a10" stroke-width=".7"/></svg><svg style="left:347px;top:85px;" width="16" height="16" viewBox="0 0 16 16"><rect x="0" y="0" width="16" height="15" fill="#bcb8c0"/><rect x="3" y="1.6" width="9.6" height="12.4" fill="#c8c6cc" stroke="#8e8c94" stroke-width="1"/><path d="M14.4 .4 L16.4 2.6 L10 9 L8 7 Z" fill="#1414f4"/><path d="M8 7 L10 9 L6.4 10.6 Z" fill="#111"/></svg><svg style="left:370px;top:85px;" width="16" height="16" viewBox="0 0 16 16"><rect x="0" y="0" width="16" height="16" fill="#fff"/><text x="8" y="5.4" font-family="Liberation Sans, sans-serif" font-size="7.4" font-weight="bold" text-anchor="middle" fill="#1c1c94" textLength="12.6" lengthAdjust="spacingAndGlyphs">УСЛ</text><rect x="1" y="6" width="3" height="1" fill="#c9c9cf"/><rect x="6" y="6" width="6" height="1" fill="#c9c9cf"/><rect x="13.5" y="6" width="2" height="1" fill="#c9c9cf"/><rect x="1" y="8" width="3" height="1" fill="#c9c9cf"/><rect x="6" y="8" width="6" height="1" fill="#c9c9cf"/><rect x="13.5" y="8" width="2" height="1" fill="#c9c9cf"/><rect x="1" y="10" width="3" height="1" fill="#c9c9cf"/><rect x="6" y="10" width="6" height="1" fill="#c9c9cf"/><rect x="13.5" y="10" width="2" height="1" fill="#c9c9cf"/><rect x="5" y="12" width="1" height="1" fill="#b0b0c0"/><rect x="7" y="12" width="3" height="1" fill="#c0c4d8"/><path d="M10 12 H13 L11.5 14.6 Z" fill="#8a9cff"/></svg><svg style="left:393px;top:85px;" width="16" height="16" viewBox="0 0 16 16"><rect x="0" y="0" width="16" height="16" fill="#fff"/><text x="8" y="5.4" font-family="Liberation Sans, sans-serif" font-size="7.4" font-weight="bold" text-anchor="middle" fill="#1c1c94" textLength="12.6" lengthAdjust="spacingAndGlyphs">АКТ</text><rect x="1" y="6" width="3" height="1" fill="#c9c9cf"/><rect x="6" y="6" width="6" height="1" fill="#c9c9cf"/><rect x="13.5" y="6" width="2" height="1" fill="#c9c9cf"/><rect x="1" y="8" width="3" height="1" fill="#c9c9cf"/><rect x="6" y="8" width="6" height="1" fill="#c9c9cf"/><rect x="13.5" y="8" width="2" height="1" fill="#c9c9cf"/><rect x="1" y="10" width="3" height="1" fill="#c9c9cf"/><rect x="6" y="10" width="6" height="1" fill="#c9c9cf"/><rect x="13.5" y="10" width="2" height="1" fill="#c9c9cf"/><rect x="5" y="12" width="1" height="1" fill="#b0b0c0"/><rect x="7" y="12" width="3" height="1" fill="#c0c4d8"/><path d="M10 12 H13 L11.5 14.6 Z" fill="#8a9cff"/></svg><svg style="left:416px;top:85px;" width="16" height="16" viewBox="0 0 16 16"><rect x="0" y="0" width="16" height="16" fill="#fff"/><text x="8" y="5.4" font-family="Liberation Sans, sans-serif" font-size="7.4" font-weight="bold" text-anchor="middle" fill="#1c1c94" textLength="12.6" lengthAdjust="spacingAndGlyphs">ТОВ</text><rect x="1" y="6" width="3" height="1" fill="#c9c9cf"/><rect x="6" y="6" width="6" height="1" fill="#c9c9cf"/><rect x="13.5" y="6" width="2" height="1" fill="#c9c9cf"/><rect x="1" y="8" width="3" height="1" fill="#c9c9cf"/><rect x="6" y="8" width="6" height="1" fill="#c9c9cf"/><rect x="13.5" y="8" width="2" height="1" fill="#c9c9cf"/><rect x="1" y="10" width="3" height="1" fill="#c9c9cf"/><rect x="6" y="10" width="6" height="1" fill="#c9c9cf"/><rect x="13.5" y="10" width="2" height="1" fill="#c9c9cf"/><rect x="5" y="12" width="1" height="1" fill="#b0b0c0"/><rect x="7" y="12" width="3" height="1" fill="#c0c4d8"/><path d="M10 12 H13 L11.5 14.6 Z" fill="#8a9cff"/></svg><svg style="left:444px;top:85px;" width="16" height="16" viewBox="0 0 16 16"><rect x="0" y="0" width="16" height="16" fill="#fff"/><text x="8" y="5.4" font-family="Liberation Sans, sans-serif" font-size="7.4" font-weight="bold" text-anchor="middle" fill="#1c1c94" textLength="15.4" lengthAdjust="spacingAndGlyphs">НАКЛ</text><rect x="1" y="6" width="3" height="1" fill="#c9c9cf"/><rect x="6" y="6" width="6" height="1" fill="#c9c9cf"/><rect x="13.5" y="6" width="2" height="1" fill="#c9c9cf"/><rect x="1" y="8" width="3" height="1" fill="#c9c9cf"/><rect x="6" y="8" width="6" height="1" fill="#c9c9cf"/><rect x="13.5" y="8" width="2" height="1" fill="#c9c9cf"/><rect x="1" y="10" width="3" height="1" fill="#c9c9cf"/><rect x="6" y="10" width="6" height="1" fill="#c9c9cf"/><rect x="13.5" y="10" width="2" height="1" fill="#c9c9cf"/><rect x="5" y="12" width="1" height="1" fill="#b0b0c0"/><rect x="7" y="12" width="3" height="1" fill="#c0c4d8"/><path d="M10 12 H13 L11.5 14.6 Z" fill="#8a9cff"/></svg><svg style="left:467px;top:85px;" width="16" height="16" viewBox="0 0 16 16"><rect x="0" y="0" width="16" height="16" fill="#fff"/><text x="8" y="5.4" font-family="Liberation Sans, sans-serif" font-size="7.4" font-weight="bold" text-anchor="middle" fill="#1c1c94" textLength="15.4" lengthAdjust="spacingAndGlyphs">СЧЕТ</text><rect x="1" y="6" width="3" height="1" fill="#c9c9cf"/><rect x="6" y="6" width="6" height="1" fill="#c9c9cf"/><rect x="13.5" y="6" width="2" height="1" fill="#c9c9cf"/><rect x="1" y="8" width="3" height="1" fill="#c9c9cf"/><rect x="6" y="8" width="6" height="1" fill="#c9c9cf"/><rect x="13.5" y="8" width="2" height="1" fill="#c9c9cf"/><rect x="1" y="10" width="3" height="1" fill="#c9c9cf"/><rect x="6" y="10" width="6" height="1" fill="#c9c9cf"/><rect x="13.5" y="10" width="2" height="1" fill="#c9c9cf"/><rect x="5" y="12" width="1" height="1" fill="#b0b0c0"/><rect x="7" y="12" width="3" height="1" fill="#c0c4d8"/><path d="M10 12 H13 L11.5 14.6 Z" fill="#8a9cff"/></svg><svg style="left:490px;top:85px;" width="16" height="16" viewBox="0 0 16 16"><rect x="0" y="0" width="16" height="16" fill="#fff"/><text x="8" y="5.4" font-family="Liberation Sans, sans-serif" font-size="7.4" font-weight="bold" text-anchor="middle" fill="#1c1c94" textLength="15.4" lengthAdjust="spacingAndGlyphs">ЦЕХ1</text><rect x="8" y="6" width="7" height="1" fill="#c9c9cf"/><rect x="1" y="8" width="2" height="1" fill="#c9c9cf"/><rect x="4" y="8" width="5" height="1" fill="#c9c9cf"/><rect x="10" y="8" width="2" height="1" fill="#c9c9cf"/><rect x="13" y="8" width="2" height="1" fill="#c9c9cf"/><rect x="1" y="10" width="2" height="1" fill="#c9c9cf"/><rect x="4" y="10" width="5" height="1" fill="#c9c9cf"/><rect x="10" y="10" width="2" height="1" fill="#c9c9cf"/><rect x="13" y="10" width="2" height="1" fill="#c9c9cf"/><rect x="1" y="12" width="2" height="1" fill="#c9c9cf"/><rect x="4" y="12" width="5" height="1" fill="#c9c9cf"/><rect x="10" y="12" width="2" height="1" fill="#c9c9cf"/><rect x="13" y="12" width="2" height="1" fill="#c9c9cf"/><rect x="1" y="14" width="2" height="1" fill="#c9c9cf"/><rect x="4" y="14" width="5" height="1" fill="#c9c9cf"/><rect x="10" y="14" width="2" height="1" fill="#c9c9cf"/><rect x="13" y="14" width="2" height="1" fill="#c9c9cf"/></svg><svg style="left:513px;top:85px;" width="16" height="16" viewBox="0 0 16 16"><rect x="0" y="0" width="16" height="16" fill="#fff"/><text x="8" y="5.4" font-family="Liberation Sans, sans-serif" font-size="7.4" font-weight="bold" text-anchor="middle" fill="#1c1c94" textLength="7.6" lengthAdjust="spacingAndGlyphs">ЗП</text><rect x="1" y="6" width="3" height="1" fill="#c9c9cf"/><rect x="6" y="6" width="6" height="1" fill="#c9c9cf"/><rect x="13.5" y="6" width="2" height="1" fill="#c9c9cf"/><rect x="1" y="8" width="3" height="1" fill="#c9c9cf"/><rect x="6" y="8" width="6" height="1" fill="#c9c9cf"/><rect x="13.5" y="8" width="2" height="1" fill="#c9c9cf"/><rect x="1" y="10" width="3" height="1" fill="#c9c9cf"/><rect x="6" y="10" width="6" height="1" fill="#c9c9cf"/><rect x="13.5" y="10" width="2" height="1" fill="#c9c9cf"/><rect x="5" y="12" width="1" height="1" fill="#b0b0c0"/><rect x="7" y="12" width="3" height="1" fill="#c0c4d8"/><path d="M10 12 H13 L11.5 14.6 Z" fill="#8a9cff"/></svg><svg style="left:536px;top:85px;" width="16" height="16" viewBox="0 0 16 16"><path d="M.4 1.4 H3 L5.4 10.4 H14.6 M4.6 12.4 H15 M3.4 3.6 H15.6 V8.6 H5" fill="none" stroke="#111" stroke-width="1.1"/><rect x="4.2" y="4.2" width="11" height="4" fill="#e8e8e8"/><rect x="5.0" y="4" width=".8" height="4.6" fill="#777"/><rect x="7.2" y="4" width=".8" height="4.6" fill="#777"/><rect x="9.4" y="4" width=".8" height="4.6" fill="#777"/><rect x="11.600000000000001" y="4" width=".8" height="4.6" fill="#777"/><rect x="13.8" y="4" width=".8" height="4.6" fill="#777"/><rect x="4" y="5.8" width="11.4" height=".8" fill="#777"/><circle cx="6" cy="14.4" r="1.2" fill="#111"/><circle cx="13.6" cy="14.4" r="1.2" fill="#111"/><path d="M4.4 12.4 L3 10.6 L4.6 9" fill="none" stroke="#111" stroke-width="1"/></svg><svg style="left:559px;top:85px;" width="16" height="16" viewBox="0 0 16 16"><rect x="0" y="0" width="16" height="16" fill="#20c060"/><rect x="1.4" y="1.4" width="13.2" height="12.6" fill="#8a8a30"/><path d="M1.4 1.4 H5 L1.4 5 Z M14.6 14 H11 L14.6 10.4 Z" fill="#111"/><path d="M1.4 6 L6 3.4 L6 13 H1.4 Z" fill="#fffff0"/><path d="M6.4 9 L12.4 5.6 V11 L10 13 H6.4 Z" fill="#fffff0"/><path d="M1.4 8 H6 M1.4 10 H6 M1.4 12 H6 M6.4 11 H10.6 M6.4 12.6 H10" stroke="#e0d800" stroke-width=".9"/><path d="M5 8 L11 2 M7 9 L13 3" stroke="#222" stroke-width=".9" stroke-dasharray="1.2 .8"/></svg><svg style="left:582px;top:85px;" width="16" height="16" viewBox="0 0 16 16"><rect x="3.5" y="1.5" width="11" height="13.5" rx="1" fill="#fdf1de" stroke="#8c9cab"/><rect x="9" y="2" width="5" height="3" fill="#f0a050"/><rect x="10.5" y="3" width="1.3" height="1.3" fill="#fff"/><text x="9.2" y="13.6" font-family="Liberation Sans, sans-serif" font-size="9.5" text-anchor="middle" fill="#e8301a" textLength="9.5" lengthAdjust="spacingAndGlyphs">31</text><path d="M0.8 4 L3.8 6.6 L8.2 0.8" fill="none" stroke="#2f8a1a" stroke-width="2.6"/><path d="M1 3.8 L3.8 6 L8 0.8" fill="none" stroke="#5fc23a" stroke-width="1.4"/></svg><svg style="left:605px;top:85px;" width="16" height="16" viewBox="0 0 16 16"><rect width="16" height="16" fill="#ffff00"/><text x="8" y="10.3" font-family="Liberation Sans, sans-serif" font-size="6.5" font-weight="bold" text-anchor="middle" fill="#2a2ae0" textLength="14" lengthAdjust="spacingAndGlyphs">НДС</text></svg><span class="t" style="left:623.5px;top:87.34px;font-size:12px;line-height:12px;color:#3a2c00;transform:scaleX(0.8970);">Исх</span><svg style="left:650px;top:85px;" width="16" height="16" viewBox="0 0 16 16"><rect width="16" height="16" fill="#ffff00"/><text x="8" y="10.3" font-family="Liberation Sans, sans-serif" font-size="6.5" font-weight="bold" text-anchor="middle" fill="#2a2ae0" textLength="14" lengthAdjust="spacingAndGlyphs">НДС</text></svg><span class="t" style="left:668.5px;top:87.34px;font-size:12px;line-height:12px;color:#3a2c00;transform:scaleX(0.8288);">Вх</span><svg style="left:693px;top:85px;" width="16" height="16" viewBox="0 0 16 16"><path d="M.5 .5 H6.5 L9 3 V13 H.5 Z" fill="#fff" stroke="#9aa" stroke-width=".7"/><text x="4.4" y="10.6" font-family="Liberation Sans, sans-serif" font-size="9" text-anchor="middle" fill="#222">Σ</text><rect x=".4" y="12.6" width="3" height="1" fill="#667"/><circle cx="12.4" cy="5" r="2" fill="#c87848"/><path d="M9.6 12.6 V9.6 L12.4 7 L15.4 9.6 V12.6 Z" fill="#2a6ae8"/><circle cx="8.4" cy="8.2" r="2.2" fill="#b86838"/><path d="M4.6 16 V12.8 L8.4 10.2 L12.4 12.8 V16 Z" fill="#f02a3a"/><path d="M7 11 L8.4 12.6 L9.8 11" fill="none" stroke="#fff" stroke-width=".6"/></svg><svg style="left:721px;top:85px;" width="16" height="16" viewBox="0 0 16 16"><defs><linearGradient id="gm" x1="0" y1="0" x2="0" y2="1"><stop offset="0" stop-color="#f6e0a0"/><stop offset="1" stop-color="#e4bc64"/></linearGradient></defs><rect x=".6" y="2.6" width="14.8" height="11" fill="url(#gm)" stroke="#c4983a" stroke-width="1.1"/><path d="M1 3 L5 8 M15 3 L11 8 M1 13.4 L4.6 9.6 M15 13.4 L11.4 9.6" stroke="#d0a850" stroke-width=".8"/><text x="8" y="11.4" font-family="Liberation Sans, sans-serif" font-size="9.5" font-weight="bold" text-anchor="middle" fill="#7a4a1a">@</text></svg><span class="t" style="left:739.5px;top:87.34px;font-size:12px;line-height:12px;color:#3a2c00;transform:scaleX(0.8974);">Реестр</span><svg style="left:782px;top:98px;" width="7" height="4" viewBox="0 0 7 4"><path d="M0 0 H7 L3.5 3.6 Z" fill="#3a2a00"/></svg><div style="left:9px;top:106px;width:1494px;height:1px;background:#9c9c9c"></div><div style="left:9px;top:106px;width:1494px;height:795px;background:#fcfaeb;border:1px solid #a0a0a0;border-right-color:#fff;border-bottom-color:#fff"></div><div style="left:10px;top:107px;width:1492px;height:793px;border:1px solid #696969;border-right-color:#e3e3e3;border-bottom-color:#e3e3e3;background:linear-gradient(90deg,#fffef6 0,#fcfaeb 40px)"></div><div style="left:23px;top:120px;width:119px;height:29px;background:#dbe9fc;border:1px solid #b3ac86;box-shadow:inset 1px 1px 0 #e8f1fd,inset -1px -1px 0 #cfdff5"></div><span class="t b" style="left:53.7px;top:127.15px;font-size:14px;line-height:14px;color:#4a3600;font-weight:bold;transform:scaleX(1.0094);">Личный</span><div class="btn" style="left:148px;top:120px;width:173px;height:29px;"></div><span class="tw"><span class="t b" style="left:163.4px;top:127.15px;font-size:14px;line-height:14px;color:#4a3600;font-weight:bold;transform:scaleX(1.0058);">Отчеты</span> <span class="t b" style="left:222px;top:127.15px;font-size:14px;line-height:14px;color:#4a3600;font-weight:bold;transform:scaleX(0.8131);">и</span> <span class="t b" style="left:235px;top:127.15px;font-size:14px;line-height:14px;color:#4a3600;font-weight:bold;transform:scaleX(1.0976);">платежки</span></span><span class="tw"><span class="t b" style="left:366px;top:130.15px;font-size:14px;line-height:14px;color:#4a3600;font-weight:bold;transform:scaleX(1.0663);">Режим</span> <span class="t b" style="left:418.8px;top:130.15px;font-size:14px;line-height:14px;color:#4a3600;font-weight:bold;transform:scaleX(1.0639);">отображения</span> <span class="t b" style="left:521px;top:130.15px;font-size:14px;line-height:14px;color:#4a3600;font-weight:bold;transform:scaleX(1.0414);">списка</span> <span class="t b" style="left:575.5px;top:130.15px;font-size:14px;line-height:14px;color:#4a3600;font-weight:bold;transform:scaleX(1.1056);">задач:</span></span><div class="btn" style="left:637px;top:126px;width:100px;height:23px;"></div><span class="t" style="left:651.5px;top:131.76px;font-size:12.8px;line-height:12.8px;color:#4a3600;font-weight:bold;transform:scaleX(0.9295);">Расписание</span><div class="btn" style="left:741px;top:126px;width:100px;height:23px;"></div><span class="t" style="left:775px;top:131.76px;font-size:12.8px;line-height:12.8px;color:#4a3600;font-weight:bold;transform:scaleX(0.9531);">День</span><div style="left:845px;top:126px;width:100px;height:23px;background:#dbe9fc;border:1px solid #b3ac86;border-radius:3px"></div><div style="left:847px;top:128px;width:96px;height:19px;border:1px dotted #000"></div><span class="t" style="left:873.5px;top:131.76px;font-size:12.8px;line-height:12.8px;color:#4a3600;font-weight:bold;transform:scaleX(0.9110);">Неделя</span><div class="btn" style="left:949px;top:126px;width:100px;height:23px;"></div><span class="t" style="left:980.5px;top:131.76px;font-size:12.8px;line-height:12.8px;color:#4a3600;font-weight:bold;transform:scaleX(0.9360);">Месяц</span><div class="btn" style="left:1055px;top:126px;width:100px;height:23px;"></div><svg style="left:1058px;top:129px;" width="16" height="16" viewBox="0 0 16 16"><path d="M3.2 8.6 A5 5 0 0 1 12.4 5.6" fill="none" stroke="#2f8f1f" stroke-width="1.3"/><path d="M10.6 3.4 L14.8 6.2 L10.2 7.6 Z" fill="#2f8f1f"/><path d="M12.8 8 A5 5 0 0 1 3.8 11" fill="none" stroke="#2f8f1f" stroke-width="1.3"/><path d="M5.4 13.2 L1.2 10.4 L5.8 9 Z" fill="#2f8f1f"/></svg><span class="t" style="left:1086.5px;top:131.76px;font-size:12.8px;line-height:12.8px;color:#4a3600;font-weight:bold;transform:scaleX(0.9007);">Обновить</span><div style="left:1161px;top:131px;width:13px;height:13px;background:#fff;border:1px solid #b3ac86;border-radius:2px"></div><svg style="left:1161px;top:131px;" width="13" height="13" viewBox="0 0 13 13"><path d="M3 6.4 L5.4 9.4 L10 3.4" fill="none" stroke="#333" stroke-width="2"/></svg><span class="tw"><span class="t b" style="left:1176.8px;top:130.15px;font-size:14px;line-height:14px;color:#4a3600;font-weight:bold;transform:scaleX(1.0276);">Не</span> <span class="t b" style="left:1200.1px;top:130.15px;font-size:14px;line-height:14px;color:#4a3600;font-weight:bold;transform:scaleX(1.0695);">показывать</span> <span class="t b" style="left:1293.1px;top:130.15px;font-size:14px;line-height:14px;color:#4a3600;font-weight:bold;transform:scaleX(1.0004);">выполненые</span> <span class="t b" style="left:1388.6px;top:130.15px;font-size:14px;line-height:14px;color:#4a3600;font-weight:bold;transform:scaleX(1.0944);">задания</span></span><div style="left:1162px;top:170px;width:13px;height:13px;background:#fff;border:1px solid #b3ac86;border-radius:2px"></div><span class="tw"><span class="t b" style="left:1177.9px;top:169.15px;font-size:14px;line-height:14px;color:#4a3600;font-weight:bold;transform:scaleX(1.0609);">Показывать</span> <span class="t b" style="left:1271.9px;top:169.15px;font-size:14px;line-height:14px;color:#4a3600;font-weight:bold;transform:scaleX(1.0024);">все</span> <span class="t b" style="left:1301.1px;top:169.15px;font-size:14px;line-height:14px;color:#4a3600;font-weight:bold;transform:scaleX(1.1129);">задачи</span> <span class="t b" style="left:1359.8px;top:169.15px;font-size:14px;line-height:14px;color:#4a3600;font-weight:bold;transform:scaleX(0.8131);">и</span> <span class="t b" style="left:1372.5px;top:169.15px;font-size:14px;line-height:14px;color:#4a3600;font-weight:bold;transform:scaleX(1.0597);">напоминания</span></span><span class="t b" style="left:25.5px;top:170.15px;font-size:14px;line-height:14px;color:#4a3600;font-weight:bold;transform:scaleX(1.0388);">Поиск:</span><div style="left:92px;top:168px;width:230px;height:19px;background:#fff;border:1px solid #b3ac86;border-radius:3px"></div><div style="left:306px;top:169px;width:15px;height:17px;background:linear-gradient(180deg,#fdfcf3,#efe9cf);border-left:1px solid #d8d2b2;border-radius:0 2px 2px 0"></div><svg style="left:306px;top:169px;" width="15" height="17" viewBox="0 0 15 17"><path d="M4.5 5 L11.5 12 M11.5 5 L4.5 12" stroke="#4a3600" stroke-width="1.6"/></svg><div class="btn" style="left:328px;top:168px;width:23px;height:19px;"></div><svg style="left:331px;top:170px;" width="18" height="16" viewBox="0 0 18 16"><circle cx="7.4" cy="6.4" r="4.7" fill="#dbe8f8" stroke="#c09c84" stroke-width="1.2"/><path d="M11 10.2 L15 14.4" stroke="#b88c6c" stroke-width="2.4" stroke-linecap="round"/></svg><div class="btn" style="left:354px;top:165px;width:26px;height:24px;"></div><svg style="left:359px;top:169px;" width="16" height="16" viewBox="0 0 16 16"><rect x="1.5" y="2" width="13" height="12.6" rx="1" fill="#fdfdfd" stroke="#8e949c"/><rect x="1.5" y="1.6" width="13" height="3" rx="1" fill="#ee4a2c"/><rect x="4.4" y="0.3" width="1.5" height="3" rx=".7" fill="#8aa0b8"/><rect x="10" y="0.3" width="1.5" height="3" rx=".7" fill="#8aa0b8"/><path d="M11 14.6 H14.5 V11.6 Z" fill="#a8aeb6"/><text x="8" y="12" font-family="Liberation Sans, sans-serif" font-size="8.6" font-weight="bold" text-anchor="middle" fill="#111" textLength="8.6" lengthAdjust="spacingAndGlyphs">15</text></svg><svg style="left:387px;top:169px;" width="16" height="16" viewBox="0 0 16 16"><rect x="0.5" y=".5" width="15" height="14.4" fill="#fff" stroke="#3f93d6"/><rect x="4.7" y="2.60" width="1.9" height="1.5" fill="#5c9ce2"/><rect x="7.1" y="2.60" width="1.9" height="1.5" fill="#5c9ce2"/><rect x="9.5" y="2.60" width="1.9" height="1.5" fill="#5c9ce2"/><rect x="11.9" y="2.60" width="1.9" height="1.5" fill="#5c9ce2"/><rect x="2.3" y="4.85" width="1.9" height="1.5" fill="#c0c9d6"/><rect x="4.7" y="4.85" width="1.9" height="1.5" fill="#c0c9d6"/><rect x="7.1" y="4.85" width="1.9" height="1.5" fill="#c0c9d6"/><rect x="9.5" y="4.85" width="1.9" height="1.5" fill="#c0c9d6"/><rect x="11.9" y="4.85" width="1.9" height="1.5" fill="#c0c9d6"/><rect x="2.3" y="7.10" width="1.9" height="1.5" fill="#c0c9d6"/><rect x="4.7" y="7.10" width="1.9" height="1.5" fill="#c0c9d6"/><rect x="7.1" y="7.10" width="1.9" height="1.5" fill="#c0c9d6"/><rect x="9.5" y="7.10" width="1.9" height="1.5" fill="#c0c9d6"/><rect x="11.9" y="7.10" width="1.9" height="1.5" fill="#c0c9d6"/><rect x="2.3" y="9.35" width="1.9" height="1.5" fill="#c0c9d6"/><rect x="4.7" y="9.35" width="1.9" height="1.5" fill="#c0c9d6"/><rect x="7.1" y="9.35" width="1.9" height="1.5" fill="#c0c9d6"/><rect x="9.5" y="9.35" width="1.9" height="1.5" fill="#c0c9d6"/><rect x="11.9" y="9.35" width="1.9" height="1.5" fill="#c0c9d6"/><rect x="2.3" y="11.60" width="1.9" height="1.5" fill="#c0c9d6"/><rect x="4.7" y="11.60" width="1.9" height="1.5" fill="#c0c9d6"/><rect x="7.1" y="11.60" width="1.9" height="1.5" fill="#c0c9d6"/><rect x="9.5" y="11.60" width="1.9" height="1.5" fill="#c0c9d6"/><rect x="11.9" y="11.60" width="1.9" height="1.5" fill="#c0c9d6"/><path d="M0.4 8 L4.6 4 V6.2 H8.2 V9.8 H4.6 V12 Z" fill="#76c42c" stroke="#3f8f14" stroke-width=".9"/></svg><div style="left:832px;top:166px;width:99px;height:22px;background:#f1eacb;border:1px solid #b3ac86"></div><svg style="left:415px;top:169px;" width="16" height="16" viewBox="0 0 16 16"><rect x="0.5" y=".5" width="15" height="14.4" fill="#fff" stroke="#3f93d6"/><rect x="4.7" y="2.60" width="1.9" height="1.5" fill="#5c9ce2"/><rect x="7.1" y="2.60" width="1.9" height="1.5" fill="#5c9ce2"/><rect x="9.5" y="2.60" width="1.9" height="1.5" fill="#5c9ce2"/><rect x="11.9" y="2.60" width="1.9" height="1.5" fill="#5c9ce2"/><rect x="2.3" y="4.85" width="1.9" height="1.5" fill="#c0c9d6"/><rect x="4.7" y="4.85" width="1.9" height="1.5" fill="#c0c9d6"/><rect x="7.1" y="4.85" width="1.9" height="1.5" fill="#c0c9d6"/><rect x="9.5" y="4.85" width="1.9" height="1.5" fill="#c0c9d6"/><rect x="11.9" y="4.85" width="1.9" height="1.5" fill="#c0c9d6"/><rect x="2.3" y="7.10" width="1.9" height="1.5" fill="#c0c9d6"/><rect x="4.7" y="7.10" width="1.9" height="1.5" fill="#c0c9d6"/><rect x="7.1" y="7.10" width="1.9" height="1.5" fill="#c0c9d6"/><rect x="9.5" y="7.10" width="1.9" height="1.5" fill="#c0c9d6"/><rect x="11.9" y="7.10" width="1.9" height="1.5" fill="#c0c9d6"/><rect x="2.3" y="9.35" width="1.9" height="1.5" fill="#c0c9d6"/><rect x="4.7" y="9.35" width="1.9" height="1.5" fill="#c0c9d6"/><rect x="7.1" y="9.35" width="1.9" height="1.5" fill="#c0c9d6"/><rect x="9.5" y="9.35" width="1.9" height="1.5" fill="#c0c9d6"/><rect x="11.9" y="9.35" width="1.9" height="1.5" fill="#c0c9d6"/><rect x="2.3" y="11.60" width="1.9" height="1.5" fill="#c0c9d6"/><rect x="4.7" y="11.60" width="1.9" height="1.5" fill="#c0c9d6"/><rect x="7.1" y="11.60" width="1.9" height="1.5" fill="#c0c9d6"/><rect x="9.5" y="11.60" width="1.9" height="1.5" fill="#c0c9d6"/><rect x="11.9" y="11.60" width="1.9" height="1.5" fill="#c0c9d6"/></svg><span class="t" style="left:439px;top:171.93px;font-size:12.6px;line-height:12.6px;color:#705e22;transform:scaleX(0.8390);">26 - 01 июнь</span><svg style="left:520px;top:169px;" width="16" height="16" viewBox="0 0 16 16"><rect x="0.5" y=".5" width="15" height="14.4" fill="#fff" stroke="#3f93d6"/><rect x="4.7" y="2.60" width="1.9" height="1.5" fill="#86b6ea"/><rect x="7.1" y="2.60" width="1.9" height="1.5" fill="#86b6ea"/><rect x="9.5" y="2.60" width="1.9" height="1.5" fill="#86b6ea"/><rect x="11.9" y="2.60" width="1.9" height="1.5" fill="#86b6ea"/><rect x="2.3" y="4.85" width="1.9" height="1.5" fill="#5c9ce2"/><rect x="4.7" y="4.85" width="1.9" height="1.5" fill="#5c9ce2"/><rect x="7.1" y="4.85" width="1.9" height="1.5" fill="#5c9ce2"/><rect x="9.5" y="4.85" width="1.9" height="1.5" fill="#5c9ce2"/><rect x="11.9" y="4.85" width="1.9" height="1.5" fill="#5c9ce2"/><rect x="2" y="4.75" width="12.2" height="1.8" fill="#6ea8e6" opacity=".75"/><rect x="2.3" y="7.10" width="1.9" height="1.5" fill="#c0c9d6"/><rect x="4.7" y="7.10" width="1.9" height="1.5" fill="#c0c9d6"/><rect x="7.1" y="7.10" width="1.9" height="1.5" fill="#c0c9d6"/><rect x="9.5" y="7.10" width="1.9" height="1.5" fill="#c0c9d6"/><rect x="11.9" y="7.10" width="1.9" height="1.5" fill="#c0c9d6"/><rect x="2.3" y="9.35" width="1.9" height="1.5" fill="#c0c9d6"/><rect x="4.7" y="9.35" width="1.9" height="1.5" fill="#c0c9d6"/><rect x="7.1" y="9.35" width="1.9" height="1.5" fill="#c0c9d6"/><rect x="9.5" y="9.35" width="1.9" height="1.5" fill="#c0c9d6"/><rect x="11.9" y="9.35" width="1.9" height="1.5" fill="#c0c9d6"/><rect x="2.3" y="11.60" width="1.9" height="1.5" fill="#c0c9d6"/><rect x="4.7" y="11.60" width="1.9" height="1.5" fill="#c0c9d6"/><rect x="7.1" y="11.60" width="1.9" height="1.5" fill="#c0c9d6"/><rect x="9.5" y="11.60" width="1.9" height="1.5" fill="#c0c9d6"/><rect x="11.9" y="11.60" width="1.9" height="1.5" fill="#c0c9d6"/></svg><span class="t" style="left:544px;top:171.93px;font-size:12.6px;line-height:12.6px;color:#705e22;transform:scaleX(0.8390);">02 - 08 июнь</span><svg style="left:625px;top:169px;" width="16" height="16" viewBox="0 0 16 16"><rect x="0.5" y=".5" width="15" height="14.4" fill="#fff" stroke="#3f93d6"/><rect x="4.7" y="2.60" width="1.9" height="1.5" fill="#86b6ea"/><rect x="7.1" y="2.60" width="1.9" height="1.5" fill="#86b6ea"/><rect x="9.5" y="2.60" width="1.9" height="1.5" fill="#86b6ea"/><rect x="11.9" y="2.60" width="1.9" height="1.5" fill="#86b6ea"/><rect x="2.3" y="4.85" width="1.9" height="1.5" fill="#c0c9d6"/><rect x="4.7" y="4.85" width="1.9" height="1.5" fill="#c0c9d6"/><rect x="7.1" y="4.85" width="1.9" height="1.5" fill="#c0c9d6"/><rect x="9.5" y="4.85" width="1.9" height="1.5" fill="#c0c9d6"/><rect x="11.9" y="4.85" width="1.9" height="1.5" fill="#c0c9d6"/><rect x="2.3" y="7.10" width="1.9" height="1.5" fill="#5c9ce2"/><rect x="4.7" y="7.10" width="1.9" height="1.5" fill="#5c9ce2"/><rect x="7.1" y="7.10" width="1.9" height="1.5" fill="#5c9ce2"/><rect x="9.5" y="7.10" width="1.9" height="1.5" fill="#5c9ce2"/><rect x="11.9" y="7.10" width="1.9" height="1.5" fill="#5c9ce2"/><rect x="2" y="7.00" width="12.2" height="1.8" fill="#6ea8e6" opacity=".75"/><rect x="2.3" y="9.35" width="1.9" height="1.5" fill="#c0c9d6"/><rect x="4.7" y="9.35" width="1.9" height="1.5" fill="#c0c9d6"/><rect x="7.1" y="9.35" width="1.9" height="1.5" fill="#c0c9d6"/><rect x="9.5" y="9.35" width="1.9" height="1.5" fill="#c0c9d6"/><rect x="11.9" y="9.35" width="1.9" height="1.5" fill="#c0c9d6"/><rect x="2.3" y="11.60" width="1.9" height="1.5" fill="#c0c9d6"/><rect x="4.7" y="11.60" width="1.9" height="1.5" fill="#c0c9d6"/><rect x="7.1" y="11.60" width="1.9" height="1.5" fill="#c0c9d6"/><rect x="9.5" y="11.60" width="1.9" height="1.5" fill="#c0c9d6"/><rect x="11.9" y="11.60" width="1.9" height="1.5" fill="#c0c9d6"/></svg><span class="t" style="left:649px;top:171.93px;font-size:12.6px;line-height:12.6px;color:#705e22;transform:scaleX(0.8390);">09 - 15 июнь</span><svg style="left:730px;top:169px;" width="16" height="16" viewBox="0 0 16 16"><rect x="0.5" y=".5" width="15" height="14.4" fill="#fff" stroke="#3f93d6"/><rect x="4.7" y="2.60" width="1.9" height="1.5" fill="#86b6ea"/><rect x="7.1" y="2.60" width="1.9" height="1.5" fill="#86b6ea"/><rect x="9.5" y="2.60" width="1.9" height="1.5" fill="#86b6ea"/><rect x="11.9" y="2.60" width="1.9" height="1.5" fill="#86b6ea"/><rect x="2.3" y="4.85" width="1.9" height="1.5" fill="#c0c9d6"/><rect x="4.7" y="4.85" width="1.9" height="1.5" fill="#c0c9d6"/><rect x="7.1" y="4.85" width="1.9" height="1.5" fill="#c0c9d6"/><rect x="9.5" y="4.85" width="1.9" height="1.5" fill="#c0c9d6"/><rect x="11.9" y="4.85" width="1.9" height="1.5" fill="#c0c9d6"/><rect x="2.3" y="7.10" width="1.9" height="1.5" fill="#c0c9d6"/><rect x="4.7" y="7.10" width="1.9" height="1.5" fill="#c0c9d6"/><rect x="7.1" y="7.10" width="1.9" height="1.5" fill="#c0c9d6"/><rect x="9.5" y="7.10" width="1.9" height="1.5" fill="#c0c9d6"/><rect x="11.9" y="7.10" width="1.9" height="1.5" fill="#c0c9d6"/><rect x="2.3" y="9.35" width="1.9" height="1.5" fill="#5c9ce2"/><rect x="4.7" y="9.35" width="1.9" height="1.5" fill="#5c9ce2"/><rect x="7.1" y="9.35" width="1.9" height="1.5" fill="#5c9ce2"/><rect x="9.5" y="9.35" width="1.9" height="1.5" fill="#5c9ce2"/><rect x="11.9" y="9.35" width="1.9" height="1.5" fill="#5c9ce2"/><rect x="2" y="9.25" width="12.2" height="1.8" fill="#6ea8e6" opacity=".75"/><rect x="2.3" y="11.60" width="1.9" height="1.5" fill="#c0c9d6"/><rect x="4.7" y="11.60" width="1.9" height="1.5" fill="#c0c9d6"/><rect x="7.1" y="11.60" width="1.9" height="1.5" fill="#c0c9d6"/><rect x="9.5" y="11.60" width="1.9" height="1.5" fill="#c0c9d6"/><rect x="11.9" y="11.60" width="1.9" height="1.5" fill="#c0c9d6"/></svg><span class="t" style="left:754px;top:171.93px;font-size:12.6px;line-height:12.6px;color:#705e22;transform:scaleX(0.8390);">16 - 22 июнь</span><svg style="left:836px;top:169px;" width="16" height="16" viewBox="0 0 16 16"><rect x="0.5" y=".5" width="15" height="14.4" fill="#fff" stroke="#3f93d6"/><rect x="4.7" y="2.60" width="1.9" height="1.5" fill="#86b6ea"/><rect x="7.1" y="2.60" width="1.9" height="1.5" fill="#86b6ea"/><rect x="9.5" y="2.60" width="1.9" height="1.5" fill="#86b6ea"/><rect x="11.9" y="2.60" width="1.9" height="1.5" fill="#86b6ea"/><rect x="2.3" y="4.85" width="1.9" height="1.5" fill="#c0c9d6"/><rect x="4.7" y="4.85" width="1.9" height="1.5" fill="#c0c9d6"/><rect x="7.1" y="4.85" width="1.9" height="1.5" fill="#c0c9d6"/><rect x="9.5" y="4.85" width="1.9" height="1.5" fill="#c0c9d6"/><rect x="11.9" y="4.85" width="1.9" height="1.5" fill="#c0c9d6"/><rect x="2.3" y="7.10" width="1.9" height="1.5" fill="#c0c9d6"/><rect x="4.7" y="7.10" width="1.9" height="1.5" fill="#c0c9d6"/><rect x="7.1" y="7.10" width="1.9" height="1.5" fill="#c0c9d6"/><rect x="9.5" y="7.10" width="1.9" height="1.5" fill="#c0c9d6"/><rect x="11.9" y="7.10" width="1.9" height="1.5" fill="#c0c9d6"/><rect x="2.3" y="9.35" width="1.9" height="1.5" fill="#c0c9d6"/><rect x="4.7" y="9.35" width="1.9" height="1.5" fill="#c0c9d6"/><rect x="7.1" y="9.35" width="1.9" height="1.5" fill="#c0c9d6"/><rect x="9.5" y="9.35" width="1.9" height="1.5" fill="#c0c9d6"/><rect x="11.9" y="9.35" width="1.9" height="1.5" fill="#c0c9d6"/><rect x="2.3" y="11.60" width="1.9" height="1.5" fill="#5c9ce2"/><rect x="4.7" y="11.60" width="1.9" height="1.5" fill="#5c9ce2"/><rect x="7.1" y="11.60" width="1.9" height="1.5" fill="#5c9ce2"/><rect x="9.5" y="11.60" width="1.9" height="1.5" fill="#5c9ce2"/><rect x="11.9" y="11.60" width="1.9" height="1.5" fill="#5c9ce2"/><rect x="2" y="11.50" width="12.2" height="1.8" fill="#6ea8e6" opacity=".75"/></svg><span class="t" style="left:860px;top:171.93px;font-size:12.6px;line-height:12.6px;color:#705e22;transform:scaleX(0.8390);">23 - 29 июнь</span><svg style="left:941px;top:169px;" width="16" height="16" viewBox="0 0 16 16"><rect x="0.5" y=".5" width="15" height="14.4" fill="#fff" stroke="#3f93d6"/><rect x="4.7" y="2.60" width="1.9" height="1.5" fill="#5c9ce2"/><rect x="7.1" y="2.60" width="1.9" height="1.5" fill="#5c9ce2"/><rect x="9.5" y="2.60" width="1.9" height="1.5" fill="#5c9ce2"/><rect x="11.9" y="2.60" width="1.9" height="1.5" fill="#5c9ce2"/><rect x="2.3" y="4.85" width="1.9" height="1.5" fill="#c0c9d6"/><rect x="4.7" y="4.85" width="1.9" height="1.5" fill="#c0c9d6"/><rect x="7.1" y="4.85" width="1.9" height="1.5" fill="#c0c9d6"/><rect x="9.5" y="4.85" width="1.9" height="1.5" fill="#c0c9d6"/><rect x="11.9" y="4.85" width="1.9" height="1.5" fill="#c0c9d6"/><rect x="2.3" y="7.10" width="1.9" height="1.5" fill="#c0c9d6"/><rect x="4.7" y="7.10" width="1.9" height="1.5" fill="#c0c9d6"/><rect x="7.1" y="7.10" width="1.9" height="1.5" fill="#c0c9d6"/><rect x="9.5" y="7.10" width="1.9" height="1.5" fill="#c0c9d6"/><rect x="11.9" y="7.10" width="1.9" height="1.5" fill="#c0c9d6"/><rect x="2.3" y="9.35" width="1.9" height="1.5" fill="#c0c9d6"/><rect x="4.7" y="9.35" width="1.9" height="1.5" fill="#c0c9d6"/><rect x="7.1" y="9.35" width="1.9" height="1.5" fill="#c0c9d6"/><rect x="9.5" y="9.35" width="1.9" height="1.5" fill="#c0c9d6"/><rect x="11.9" y="9.35" width="1.9" height="1.5" fill="#c0c9d6"/><rect x="2.3" y="11.60" width="1.9" height="1.5" fill="#c0c9d6"/><rect x="4.7" y="11.60" width="1.9" height="1.5" fill="#c0c9d6"/><rect x="7.1" y="11.60" width="1.9" height="1.5" fill="#c0c9d6"/><rect x="9.5" y="11.60" width="1.9" height="1.5" fill="#c0c9d6"/><rect x="11.9" y="11.60" width="1.9" height="1.5" fill="#c0c9d6"/></svg><span class="t" style="left:965px;top:171.93px;font-size:12.6px;line-height:12.6px;color:#705e22;transform:scaleX(0.8376);">30 - 06 июль</span><div style="left:408px;top:167px;width:1px;height:19px;background:linear-gradient(180deg,rgba(190,180,140,0),#c4b98e 25%,#c4b98e 75%,rgba(190,180,140,0))"></div><div style="left:409px;top:167px;width:1px;height:19px;background:linear-gradient(180deg,rgba(255,255,255,0),#fffdf4 25%,#fffdf4 75%,rgba(255,255,255,0))"></div><div style="left:513px;top:167px;width:1px;height:19px;background:linear-gradient(180deg,rgba(190,180,140,0),#c4b98e 25%,#c4b98e 75%,rgba(190,180,140,0))"></div><div style="left:514px;top:167px;width:1px;height:19px;background:linear-gradient(180deg,rgba(255,255,255,0),#fffdf4 25%,#fffdf4 75%,rgba(255,255,255,0))"></div><div style="left:618px;top:167px;width:1px;height:19px;background:linear-gradient(180deg,rgba(190,180,140,0),#c4b98e 25%,#c4b98e 75%,rgba(190,180,140,0))"></div><div style="left:619px;top:167px;width:1px;height:19px;background:linear-gradient(180deg,rgba(255,255,255,0),#fffdf4 25%,#fffdf4 75%,rgba(255,255,255,0))"></div><div style="left:723px;top:167px;width:1px;height:19px;background:linear-gradient(180deg,rgba(190,180,140,0),#c4b98e 25%,#c4b98e 75%,rgba(190,180,140,0))"></div><div style="left:724px;top:167px;width:1px;height:19px;background:linear-gradient(180deg,rgba(255,255,255,0),#fffdf4 25%,#fffdf4 75%,rgba(255,255,255,0))"></div><div style="left:828px;top:167px;width:1px;height:19px;background:linear-gradient(180deg,rgba(190,180,140,0),#c4b98e 25%,#c4b98e 75%,rgba(190,180,140,0))"></div><div style="left:829px;top:167px;width:1px;height:19px;background:linear-gradient(180deg,rgba(255,255,255,0),#fffdf4 25%,#fffdf4 75%,rgba(255,255,255,0))"></div><div style="left:934px;top:167px;width:1px;height:19px;background:linear-gradient(180deg,rgba(190,180,140,0),#c4b98e 25%,#c4b98e 75%,rgba(190,180,140,0))"></div><div style="left:935px;top:167px;width:1px;height:19px;background:linear-gradient(180deg,rgba(255,255,255,0),#fffdf4 25%,#fffdf4 75%,rgba(255,255,255,0))"></div><div style="left:1038px;top:167px;width:1px;height:19px;background:linear-gradient(180deg,rgba(190,180,140,0),#c4b98e 25%,#c4b98e 75%,rgba(190,180,140,0))"></div><div style="left:1039px;top:167px;width:1px;height:19px;background:linear-gradient(180deg,rgba(255,255,255,0),#fffdf4 25%,#fffdf4 75%,rgba(255,255,255,0))"></div><div style="left:1066px;top:167px;width:1px;height:19px;background:linear-gradient(180deg,rgba(190,180,140,0),#c4b98e 25%,#c4b98e 75%,rgba(190,180,140,0))"></div><div style="left:1067px;top:167px;width:1px;height:19px;background:linear-gradient(180deg,rgba(255,255,255,0),#fffdf4 25%,#fffdf4 75%,rgba(255,255,255,0))"></div><svg style="left:1045px;top:169px;" width="16" height="16" viewBox="0 0 16 16"><rect x="0.5" y=".5" width="15" height="14.4" fill="#fff" stroke="#3f93d6"/><rect x="4.7" y="2.60" width="1.9" height="1.5" fill="#5c9ce2"/><rect x="7.1" y="2.60" width="1.9" height="1.5" fill="#5c9ce2"/><rect x="9.5" y="2.60" width="1.9" height="1.5" fill="#5c9ce2"/><rect x="11.9" y="2.60" width="1.9" height="1.5" fill="#5c9ce2"/><rect x="2.3" y="4.85" width="1.9" height="1.5" fill="#c0c9d6"/><rect x="4.7" y="4.85" width="1.9" height="1.5" fill="#c0c9d6"/><rect x="7.1" y="4.85" width="1.9" height="1.5" fill="#c0c9d6"/><rect x="9.5" y="4.85" width="1.9" height="1.5" fill="#c0c9d6"/><rect x="11.9" y="4.85" width="1.9" height="1.5" fill="#c0c9d6"/><rect x="2.3" y="7.10" width="1.9" height="1.5" fill="#c0c9d6"/><rect x="4.7" y="7.10" width="1.9" height="1.5" fill="#c0c9d6"/><rect x="7.1" y="7.10" width="1.9" height="1.5" fill="#c0c9d6"/><rect x="9.5" y="7.10" width="1.9" height="1.5" fill="#c0c9d6"/><rect x="11.9" y="7.10" width="1.9" height="1.5" fill="#c0c9d6"/><rect x="2.3" y="9.35" width="1.9" height="1.5" fill="#c0c9d6"/><rect x="4.7" y="9.35" width="1.9" height="1.5" fill="#c0c9d6"/><rect x="7.1" y="9.35" width="1.9" height="1.5" fill="#c0c9d6"/><rect x="9.5" y="9.35" width="1.9" height="1.5" fill="#c0c9d6"/><rect x="11.9" y="9.35" width="1.9" height="1.5" fill="#c0c9d6"/><rect x="2.3" y="11.60" width="1.9" height="1.5" fill="#c0c9d6"/><rect x="4.7" y="11.60" width="1.9" height="1.5" fill="#c0c9d6"/><rect x="7.1" y="11.60" width="1.9" height="1.5" fill="#c0c9d6"/><rect x="9.5" y="11.60" width="1.9" height="1.5" fill="#c0c9d6"/><rect x="11.9" y="11.60" width="1.9" height="1.5" fill="#c0c9d6"/><path d="M15.8 8 L11.6 4 V6.2 H8 V9.8 H11.6 V12 Z" fill="#76c42c" stroke="#3f8f14" stroke-width=".9"/></svg><svg style="left:1073px;top:169px;" width="16" height="16" viewBox="0 0 16 16"><rect x="1.5" y="1.6" width="13" height="13" rx="1" fill="#fff" stroke="#8d9298"/><rect x="1.5" y="1.4" width="13" height="2.8" rx="1" fill="#ee4a2c"/><rect x="4.4" y=".2" width="1.4" height="2.8" rx=".7" fill="#8aa0b8"/><rect x="10.2" y=".2" width="1.4" height="2.8" rx=".7" fill="#8aa0b8"/><path d="M0 4.6 L4.6 9.4 L0 14.2 Z" fill="#8cd02c" stroke="#4f9a18" stroke-width=".6"/><path d="M16 4.6 L11.4 9.4 L16 14.2 Z" fill="#8cd02c" stroke="#4f9a18" stroke-width=".6"/><text x="8" y="12.2" font-family="Liberation Sans, sans-serif" font-size="8.5" font-weight="bold" text-anchor="middle" fill="#111">с</text></svg><span class="t" style="left:1091px;top:171.93px;font-size:12.6px;line-height:12.6px;color:#705e22;transform:scaleX(0.8495);">Сегодня</span><div style="left:25px;top:197px;width:1465px;height:696px;border:1px solid #b3ac86;background:#fff"></div><div style="left:26px;top:198px;width:1447px;height:678px;overflow:hidden"><div class="dn" style="left:0px;top:0px;width:220px;height:16px;background:#f4ecc6">Понедельник</div><div class="dd" style="left:-1px;top:16px;width:221px;height:18px;border:1px dotted #000;border-left-color:transparent;background:#fff">23 июня 2025 г.</div><div style="left:-1px;top:48px;width:221px;height:670px;background:linear-gradient(90deg,#b3ac86 0 1px,transparent 1px 31px,#b3ac86 31px 32px,transparent 32px 56px,#b3ac86 56px 57px,transparent 57px 220px,#b3ac86 220px 221px),linear-gradient(180deg,#b3ac86 0 1px,transparent 1px) 0 0/100% 60px,linear-gradient(180deg,#b3ac86 0 1px,transparent 1px) 32px 0/189px 15px repeat-y,#ffffdd"></div><div class="hr" style="left:0px;top:48px;width:30px;height:60px;"><span>8</span></div><div class="mn" style="left:31px;top:48px;width:24px;height:15px;"><span>00</span></div><div class="mn" style="left:31px;top:63px;width:24px;height:15px;"><span>15</span></div><div class="mn" style="left:31px;top:78px;width:24px;height:15px;"><span>30</span></div><div class="mn" style="left:31px;top:93px;width:24px;height:15px;"><span>45</span></div><div class="hr" style="left:0px;top:108px;width:30px;height:60px;"><span>9</span></div><div class="mn" style="left:31px;top:108px;width:24px;height:15px;"><span>00</span></div><div class="mn" style="left:31px;top:123px;width:24px;height:15px;"><span>15</span></div><div class="mn" style="left:31px;top:138px;width:24px;height:15px;"><span>30</span></div><div class="mn" style="left:31px;top:153px;width:24px;height:15px;"><span>45</span></div><div class="hr" style="left:0px;top:168px;width:30px;height:60px;"><span>10</span></div><div class="mn" style="left:31px;top:168px;width:24px;height:15px;"><span>00</span></div><div class="mn" style="left:31px;top:183px;width:24px;height:15px;"><span>15</span></div><div class="mn" style="left:31px;top:198px;width:24px;height:15px;"><span>30</span></div><div class="mn" style="left:31px;top:213px;width:24px;height:15px;"><span>45</span></div><div class="hr" style="left:0px;top:228px;width:30px;height:60px;"><span>11</span></div><div class="mn" style="left:31px;top:228px;width:24px;height:15px;"><span>00</span></div><div class="mn" style="left:31px;top:243px;width:24px;height:15px;"><span>15</span></div><div class="mn" style="left:31px;top:258px;width:24px;height:15px;"><span>30</span></div><div class="mn" style="left:31px;top:273px;width:24px;height:15px;"><span>45</span></div><div class="hr" style="left:0px;top:288px;width:30px;height:60px;"><span>12</span></div><div class="mn" style="left:31px;top:288px;width:24px;height:15px;"><span>00</span></div><div class="mn" style="left:31px;top:303px;width:24px;height:15px;"><span>15</span></div><div class="mn" style="left:31px;top:318px;width:24px;height:15px;"><span>30</span></div><div class="mn" style="left:31px;top:333px;width:24px;height:15px;"><span>45</span></div><div class="hr" style="left:0px;top:348px;width:30px;height:60px;"><span>13</span></div><div class="mn" style="left:31px;top:348px;width:24px;height:15px;"><span>00</span></div><div class="mn" style="left:31px;top:363px;width:24px;height:15px;"><span>15</span></div><div class="mn" style="left:31px;top:378px;width:24px;height:15px;"><span>30</span></div><div class="mn" style="left:31px;top:393px;width:24px;height:15px;"><span>45</span></div><div class="hr" style="left:0px;top:408px;width:30px;height:60px;"><span>14</span></div><div class="mn" style="left:31px;top:408px;width:24px;height:15px;"><span>00</span></div><div class="mn" style="left:31px;top:423px;width:24px;height:15px;"><span>15</span></div><div class="mn" style="left:31px;top:438px;width:24px;height:15px;"><span>30</span></div><div class="mn" style="left:31px;top:453px;width:24px;height:15px;"><span>45</span></div><div class="hr" style="left:0px;top:468px;width:30px;height:60px;"><span>15</span></div><div class="mn" style="left:31px;top:468px;width:24px;height:15px;"><span>00</span></div><div class="mn" style="left:31px;top:483px;width:24px;height:15px;"><span>15</span></div><div class="mn" style="left:31px;top:498px;width:24px;height:15px;"><span>30</span></div><div class="mn" style="left:31px;top:513px;width:24px;height:15px;"><span>45</span></div><div class="hr" style="left:0px;top:528px;width:30px;height:60px;"><span>16</span></div><div class="mn" style="left:31px;top:528px;width:24px;height:15px;"><span>00</span></div><div class="mn" style="left:31px;top:543px;width:24px;height:15px;"><span>15</span></div><div class="mn" style="left:31px;top:558px;width:24px;height:15px;"><span>30</span></div><div class="mn" style="left:31px;top:573px;width:24px;height:15px;"><span>45</span></div><div class="hr" style="left:0px;top:588px;width:30px;height:60px;"><span>17</span></div><div class="mn" style="left:31px;top:588px;width:24px;height:15px;"><span>00</span></div><div class="mn" style="left:31px;top:603px;width:24px;height:15px;"><span>15</span></div><div class="mn" style="left:31px;top:618px;width:24px;height:15px;"><span>30</span></div><div class="mn" style="left:31px;top:633px;width:24px;height:15px;"><span>45</span></div><div class="hr" style="left:0px;top:648px;width:30px;height:60px;"><span>18</span></div><div class="mn" style="left:31px;top:648px;width:24px;height:15px;"><span>00</span></div><div class="mn" style="left:31px;top:663px;width:24px;height:15px;"><span>15</span></div><div class="mn" style="left:31px;top:678px;width:24px;height:15px;"><span>30</span></div><div class="mn" style="left:31px;top:693px;width:24px;height:15px;"><span>45</span></div><div class="dn" style="left:231px;top:0px;width:221px;height:16px;background:#f4ecc6">Вторник</div><div class="dd" style="left:231px;top:16px;width:221px;height:18px;border:1px dotted #000;background:#fff">24 июня 2025 г.</div><div style="left:231px;top:48px;width:221px;height:670px;background:linear-gradient(90deg,#b3ac86 0 1px,transparent 1px 31px,#b3ac86 31px 32px,transparent 32px 56px,#b3ac86 56px 57px,transparent 57px 220px,#b3ac86 220px 221px),linear-gradient(180deg,#b3ac86 0 1px,transparent 1px) 0 0/100% 60px,linear-gradient(180deg,#b3ac86 0 1px,transparent 1px) 32px 0/189px 15px repeat-y,#ffffdd"></div><div class="hr" style="left:232px;top:48px;width:30px;height:60px;"><span>8</span></div><div class="mn" style="left:263px;top:48px;width:24px;height:15px;"><span>00</span></div><div class="mn" style="left:263px;top:63px;width:24px;height:15px;"><span>15</span></div><div class="mn" style="left:263px;top:78px;width:24px;height:15px;"><span>30</span></div><div class="mn" style="left:263px;top:93px;width:24px;height:15px;"><span>45</span></div><div class="hr" style="left:232px;top:108px;width:30px;height:60px;"><span>9</span></div><div class="mn" style="left:263px;top:108px;width:24px;height:15px;"><span>00</span></div><div class="mn" style="left:263px;top:123px;width:24px;height:15px;"><span>15</span></div><div class="mn" style="left:263px;top:138px;width:24px;height:15px;"><span>30</span></div><div class="mn" style="left:263px;top:153px;width:24px;height:15px;"><span>45</span></div><div class="hr" style="left:232px;top:168px;width:30px;height:60px;"><span>10</span></div><div class="mn" style="left:263px;top:168px;width:24px;height:15px;"><span>00</span></div><div class="mn" style="left:263px;top:183px;width:24px;height:15px;"><span>15</span></div><div class="mn" style="left:263px;top:198px;width:24px;height:15px;"><span>30</span></div><div class="mn" style="left:263px;top:213px;width:24px;height:15px;"><span>45</span></div><div class="hr" style="left:232px;top:228px;width:30px;height:60px;"><span>11</span></div><div class="mn" style="left:263px;top:228px;width:24px;height:15px;"><span>00</span></div><div class="mn" style="left:263px;top:243px;width:24px;height:15px;"><span>15</span></div><div class="mn" style="left:263px;top:258px;width:24px;height:15px;"><span>30</span></div><div class="mn" style="left:263px;top:273px;width:24px;height:15px;"><span>45</span></div><div class="hr" style="left:232px;top:288px;width:30px;height:60px;"><span>12</span></div><div class="mn" style="left:263px;top:288px;width:24px;height:15px;"><span>00</span></div><div class="mn" style="left:263px;top:303px;width:24px;height:15px;"><span>15</span></div><div class="mn" style="left:263px;top:318px;width:24px;height:15px;"><span>30</span></div><div class="mn" style="left:263px;top:333px;width:24px;height:15px;"><span>45</span></div><div class="hr" style="left:232px;top:348px;width:30px;height:60px;"><span>13</span></div><div class="mn" style="left:263px;top:348px;width:24px;height:15px;"><span>00</span></div><div class="mn" style="left:263px;top:363px;width:24px;height:15px;"><span>15</span></div><div class="mn" style="left:263px;top:378px;width:24px;height:15px;"><span>30</span></div><div class="mn" style="left:263px;top:393px;width:24px;height:15px;"><span>45</span></div><div class="hr" style="left:232px;top:408px;width:30px;height:60px;"><span>14</span></div><div class="mn" style="left:263px;top:408px;width:24px;height:15px;"><span>00</span></div><div class="mn" style="left:263px;top:423px;width:24px;height:15px;"><span>15</span></div><div class="mn" style="left:263px;top:438px;width:24px;height:15px;"><span>30</span></div><div class="mn" style="left:263px;top:453px;width:24px;height:15px;"><span>45</span></div><div class="hr" style="left:232px;top:468px;width:30px;height:60px;"><span>15</span></div><div class="mn" style="left:263px;top:468px;width:24px;height:15px;"><span>00</span></div><div class="mn" style="left:263px;top:483px;width:24px;height:15px;"><span>15</span></div><div class="mn" style="left:263px;top:498px;width:24px;height:15px;"><span>30</span></div><div class="mn" style="left:263px;top:513px;width:24px;height:15px;"><span>45</span></div><div class="hr" style="left:232px;top:528px;width:30px;height:60px;"><span>16</span></div><div class="mn" style="left:263px;top:528px;width:24px;height:15px;"><span>00</span></div><div class="mn" style="left:263px;top:543px;width:24px;height:15px;"><span>15</span></div><div class="mn" style="left:263px;top:558px;width:24px;height:15px;"><span>30</span></div><div class="mn" style="left:263px;top:573px;width:24px;height:15px;"><span>45</span></div><div class="hr" style="left:232px;top:588px;width:30px;height:60px;"><span>17</span></div><div class="mn" style="left:263px;top:588px;width:24px;height:15px;"><span>00</span></div><div class="mn" style="left:263px;top:603px;width:24px;height:15px;"><span>15</span></div><div class="mn" style="left:263px;top:618px;width:24px;height:15px;"><span>30</span></div><div class="mn" style="left:263px;top:633px;width:24px;height:15px;"><span>45</span></div><div class="hr" style="left:232px;top:648px;width:30px;height:60px;"><span>18</span></div><div class="mn" style="left:263px;top:648px;width:24px;height:15px;"><span>00</span></div><div class="mn" style="left:263px;top:663px;width:24px;height:15px;"><span>15</span></div><div class="mn" style="left:263px;top:678px;width:24px;height:15px;"><span>30</span></div><div class="mn" style="left:263px;top:693px;width:24px;height:15px;"><span>45</span></div><div class="dn" style="left:463px;top:0px;width:220px;height:16px;background:#f4ecc6">Среда</div><div class="dd" style="left:463px;top:16px;width:220px;height:18px;border:1px dotted #000;background:#fff">25 июня 2025 г.</div><div style="left:463px;top:48px;width:220px;height:670px;background:linear-gradient(90deg,#b3ac86 0 1px,transparent 1px 30px,#b3ac86 30px 31px,transparent 31px 56px,#b3ac86 56px 57px,transparent 57px 219px,#b3ac86 219px 220px),linear-gradient(180deg,#b3ac86 0 1px,transparent 1px) 0 0/100% 60px,linear-gradient(180deg,#b3ac86 0 1px,transparent 1px) 31px 0/189px 15px repeat-y,#ffffdd"></div><div class="hr" style="left:464px;top:48px;width:29px;height:60px;"><span>8</span></div><div class="mn" style="left:494px;top:48px;width:25px;height:15px;"><span>00</span></div><div class="mn" style="left:494px;top:63px;width:25px;height:15px;"><span>15</span></div><div class="mn" style="left:494px;top:78px;width:25px;height:15px;"><span>30</span></div><div class="mn" style="left:494px;top:93px;width:25px;height:15px;"><span>45</span></div><div class="hr" style="left:464px;top:108px;width:29px;height:60px;"><span>9</span></div><div class="mn" style="left:494px;top:108px;width:25px;height:15px;"><span>00</span></div><div class="mn" style="left:494px;top:123px;width:25px;height:15px;"><span>15</span></div><div class="mn" style="left:494px;top:138px;width:25px;height:15px;"><span>30</span></div><div class="mn" style="left:494px;top:153px;width:25px;height:15px;"><span>45</span></div><div class="hr" style="left:464px;top:168px;width:29px;height:60px;"><span>10</span></div><div class="mn" style="left:494px;top:168px;width:25px;height:15px;"><span>00</span></div><div class="mn" style="left:494px;top:183px;width:25px;height:15px;"><span>15</span></div><div class="mn" style="left:494px;top:198px;width:25px;height:15px;"><span>30</span></div><div class="mn" style="left:494px;top:213px;width:25px;height:15px;"><span>45</span></div><div class="hr" style="left:464px;top:228px;width:29px;height:60px;"><span>11</span></div><div class="mn" style="left:494px;top:228px;width:25px;height:15px;"><span>00</span></div><div class="mn" style="left:494px;top:243px;width:25px;height:15px;"><span>15</span></div><div class="mn" style="left:494px;top:258px;width:25px;height:15px;"><span>30</span></div><div class="mn" style="left:494px;top:273px;width:25px;height:15px;"><span>45</span></div><div class="hr" style="left:464px;top:288px;width:29px;height:60px;"><span>12</span></div><div class="mn" style="left:494px;top:288px;width:25px;height:15px;"><span>00</span></div><div class="mn" style="left:494px;top:303px;width:25px;height:15px;"><span>15</span></div><div class="mn" style="left:494px;top:318px;width:25px;height:15px;"><span>30</span></div><div class="mn" style="left:494px;top:333px;width:25px;height:15px;"><span>45</span></div><div class="hr" style="left:464px;top:348px;width:29px;height:60px;"><span>13</span></div><div class="mn" style="left:494px;top:348px;width:25px;height:15px;"><span>00</span></div><div class="mn" style="left:494px;top:363px;width:25px;height:15px;"><span>15</span></div><div class="mn" style="left:494px;top:378px;width:25px;height:15px;"><span>30</span></div><div class="mn" style="left:494px;top:393px;width:25px;height:15px;"><span>45</span></div><div class="hr" style="left:464px;top:408px;width:29px;height:60px;"><span>14</span></div><div class="mn" style="left:494px;top:408px;width:25px;height:15px;"><span>00</span></div><div class="mn" style="left:494px;top:423px;width:25px;height:15px;"><span>15</span></div><div class="mn" style="left:494px;top:438px;width:25px;height:15px;"><span>30</span></div><div class="mn" style="left:494px;top:453px;width:25px;height:15px;"><span>45</span></div><div class="hr" style="left:464px;top:468px;width:29px;height:60px;"><span>15</span></div><div class="mn" style="left:494px;top:468px;width:25px;height:15px;"><span>00</span></div><div class="mn" style="left:494px;top:483px;width:25px;height:15px;"><span>15</span></div><div class="mn" style="left:494px;top:498px;width:25px;height:15px;"><span>30</span></div><div class="mn" style="left:494px;top:513px;width:25px;height:15px;"><span>45</span></div><div class="hr" style="left:464px;top:528px;width:29px;height:60px;"><span>16</span></div><div class="mn" style="left:494px;top:528px;width:25px;height:15px;"><span>00</span></div><div class="mn" style="left:494px;top:543px;width:25px;height:15px;"><span>15</span></div><div class="mn" style="left:494px;top:558px;width:25px;height:15px;"><span>30</span></div><div class="mn" style="left:494px;top:573px;width:25px;height:15px;"><span>45</span></div><div class="hr" style="left:464px;top:588px;width:29px;height:60px;"><span>17</span></div><div class="mn" style="left:494px;top:588px;width:25px;height:15px;"><span>00</span></div><div class="mn" style="left:494px;top:603px;width:25px;height:15px;"><span>15</span></div><div class="mn" style="left:494px;top:618px;width:25px;height:15px;"><span>30</span></div><div class="mn" style="left:494px;top:633px;width:25px;height:15px;"><span>45</span></div><div class="hr" style="left:464px;top:648px;width:29px;height:60px;"><span>18</span></div><div class="mn" style="left:494px;top:648px;width:25px;height:15px;"><span>00</span></div><div class="mn" style="left:494px;top:663px;width:25px;height:15px;"><span>15</span></div><div class="mn" style="left:494px;top:678px;width:25px;height:15px;"><span>30</span></div><div class="mn" style="left:494px;top:693px;width:25px;height:15px;"><span>45</span></div><div class="dn" style="left:695px;top:0px;width:220px;height:16px;background:#f4ecc6">Четверг</div><div class="dd" style="left:695px;top:16px;width:220px;height:18px;border:1px dotted #000;background:#fff">26 июня 2025 г.</div><div style="left:695px;top:48px;width:220px;height:670px;background:linear-gradient(90deg,#b3ac86 0 1px,transparent 1px 30px,#b3ac86 30px 31px,transparent 31px 56px,#b3ac86 56px 57px,transparent 57px 219px,#b3ac86 219px 220px),linear-gradient(180deg,#b3ac86 0 1px,transparent 1px) 0 0/100% 60px,linear-gradient(180deg,#b3ac86 0 1px,transparent 1px) 31px 0/189px 15px repeat-y,#ffffdd"></div><div class="hr" style="left:696px;top:48px;width:29px;height:60px;"><span>8</span></div><div class="mn" style="left:726px;top:48px;width:25px;height:15px;"><span>00</span></div><div class="mn" style="left:726px;top:63px;width:25px;height:15px;"><span>15</span></div><div class="mn" style="left:726px;top:78px;width:25px;height:15px;"><span>30</span></div><div class="mn" style="left:726px;top:93px;width:25px;height:15px;"><span>45</span></div><div class="hr" style="left:696px;top:108px;width:29px;height:60px;"><span>9</span></div><div class="mn" style="left:726px;top:108px;width:25px;height:15px;"><span>00</span></div><div class="mn" style="left:726px;top:123px;width:25px;height:15px;"><span>15</span></div><div class="mn" style="left:726px;top:138px;width:25px;height:15px;"><span>30</span></div><div class="mn" style="left:726px;top:153px;width:25px;height:15px;"><span>45</span></div><div class="hr" style="left:696px;top:168px;width:29px;height:60px;"><span>10</span></div><div class="mn" style="left:726px;top:168px;width:25px;height:15px;"><span>00</span></div><div class="mn" style="left:726px;top:183px;width:25px;height:15px;"><span>15</span></div><div class="mn" style="left:726px;top:198px;width:25px;height:15px;"><span>30</span></div><div class="mn" style="left:726px;top:213px;width:25px;height:15px;"><span>45</span></div><div class="hr" style="left:696px;top:228px;width:29px;height:60px;"><span>11</span></div><div class="mn" style="left:726px;top:228px;width:25px;height:15px;"><span>00</span></div><div class="mn" style="left:726px;top:243px;width:25px;height:15px;"><span>15</span></div><div class="mn" style="left:726px;top:258px;width:25px;height:15px;"><span>30</span></div><div class="mn" style="left:726px;top:273px;width:25px;height:15px;"><span>45</span></div><div class="hr" style="left:696px;top:288px;width:29px;height:60px;"><span>12</span></div><div class="mn" style="left:726px;top:288px;width:25px;height:15px;"><span>00</span></div><div class="mn" style="left:726px;top:303px;width:25px;height:15px;"><span>15</span></div><div class="mn" style="left:726px;top:318px;width:25px;height:15px;"><span>30</span></div><div class="mn" style="left:726px;top:333px;width:25px;height:15px;"><span>45</span></div><div class="hr" style="left:696px;top:348px;width:29px;height:60px;"><span>13</span></div><div class="mn" style="left:726px;top:348px;width:25px;height:15px;"><span>00</span></div><div class="mn" style="left:726px;top:363px;width:25px;height:15px;"><span>15</span></div><div class="mn" style="left:726px;top:378px;width:25px;height:15px;"><span>30</span></div><div class="mn" style="left:726px;top:393px;width:25px;height:15px;"><span>45</span></div><div class="hr" style="left:696px;top:408px;width:29px;height:60px;"><span>14</span></div><div class="mn" style="left:726px;top:408px;width:25px;height:15px;"><span>00</span></div><div class="mn" style="left:726px;top:423px;width:25px;height:15px;"><span>15</span></div><div class="mn" style="left:726px;top:438px;width:25px;height:15px;"><span>30</span></div><div class="mn" style="left:726px;top:453px;width:25px;height:15px;"><span>45</span></div><div class="hr" style="left:696px;top:468px;width:29px;height:60px;"><span>15</span></div><div class="mn" style="left:726px;top:468px;width:25px;height:15px;"><span>00</span></div><div class="mn" style="left:726px;top:483px;width:25px;height:15px;"><span>15</span></div><div class="mn" style="left:726px;top:498px;width:25px;height:15px;"><span>30</span></div><div class="mn" style="left:726px;top:513px;width:25px;height:15px;"><span>45</span></div><div class="hr" style="left:696px;top:528px;width:29px;height:60px;"><span>16</span></div><div class="mn" style="left:726px;top:528px;width:25px;height:15px;"><span>00</span></div><div class="mn" style="left:726px;top:543px;width:25px;height:15px;"><span>15</span></div><div class="mn" style="left:726px;top:558px;width:25px;height:15px;"><span>30</span></div><div class="mn" style="left:726px;top:573px;width:25px;height:15px;"><span>45</span></div><div class="hr" style="left:696px;top:588px;width:29px;height:60px;"><span>17</span></div><div class="mn" style="left:726px;top:588px;width:25px;height:15px;"><span>00</span></div><div class="mn" style="left:726px;top:603px;width:25px;height:15px;"><span>15</span></div><div class="mn" style="left:726px;top:618px;width:25px;height:15px;"><span>30</span></div><div class="mn" style="left:726px;top:633px;width:25px;height:15px;"><span>45</span></div><div class="hr" style="left:696px;top:648px;width:29px;height:60px;"><span>18</span></div><div class="mn" style="left:726px;top:648px;width:25px;height:15px;"><span>00</span></div><div class="mn" style="left:726px;top:663px;width:25px;height:15px;"><span>15</span></div><div class="mn" style="left:726px;top:678px;width:25px;height:15px;"><span>30</span></div><div class="mn" style="left:726px;top:693px;width:25px;height:15px;"><span>45</span></div><div class="dn" style="left:927px;top:0px;width:220px;height:16px;background:#f4ecc6">Пятница</div><div class="dd" style="left:927px;top:16px;width:220px;height:18px;border:1px dotted #000;background:#fff">27 июня 2025 г.</div><div style="left:927px;top:48px;width:220px;height:670px;background:linear-gradient(90deg,#b3ac86 0 1px,transparent 1px 30px,#b3ac86 30px 31px,transparent 31px 56px,#b3ac86 56px 57px,transparent 57px 219px,#b3ac86 219px 220px),linear-gradient(180deg,#b3ac86 0 1px,transparent 1px) 0 0/100% 60px,linear-gradient(180deg,#b3ac86 0 1px,transparent 1px) 31px 0/189px 15px repeat-y,#ffffdd"></div><div class="hr" style="left:928px;top:48px;width:29px;height:60px;"><span>8</span></div><div class="mn" style="left:958px;top:48px;width:25px;height:15px;"><span>00</span></div><div class="mn" style="left:958px;top:63px;width:25px;height:15px;"><span>15</span></div><div class="mn" style="left:958px;top:78px;width:25px;height:15px;"><span>30</span></div><div class="mn" style="left:958px;top:93px;width:25px;height:15px;"><span>45</span></div><div class="hr" style="left:928px;top:108px;width:29px;height:60px;"><span>9</span></div><div class="mn" style="left:958px;top:108px;width:25px;height:15px;"><span>00</span></div><div class="mn" style="left:958px;top:123px;width:25px;height:15px;"><span>15</span></div><div class="mn" style="left:958px;top:138px;width:25px;height:15px;"><span>30</span></div><div class="mn" style="left:958px;top:153px;width:25px;height:15px;"><span>45</span></div><div class="hr" style="left:928px;top:168px;width:29px;height:60px;"><span>10</span></div><div class="mn" style="left:958px;top:168px;width:25px;height:15px;"><span>00</span></div><div class="mn" style="left:958px;top:183px;width:25px;height:15px;"><span>15</span></div><div class="mn" style="left:958px;top:198px;width:25px;height:15px;"><span>30</span></div><div class="mn" style="left:958px;top:213px;width:25px;height:15px;"><span>45</span></div><div class="hr" style="left:928px;top:228px;width:29px;height:60px;"><span>11</span></div><div class="mn" style="left:958px;top:228px;width:25px;height:15px;"><span>00</span></div><div class="mn" style="left:958px;top:243px;width:25px;height:15px;"><span>15</span></div><div class="mn" style="left:958px;top:258px;width:25px;height:15px;"><span>30</span></div><div class="mn" style="left:958px;top:273px;width:25px;height:15px;"><span>45</span></div><div class="hr" style="left:928px;top:288px;width:29px;height:60px;"><span>12</span></div><div class="mn" style="left:958px;top:288px;width:25px;height:15px;"><span>00</span></div><div class="mn" style="left:958px;top:303px;width:25px;height:15px;"><span>15</span></div><div class="mn" style="left:958px;top:318px;width:25px;height:15px;"><span>30</span></div><div class="mn" style="left:958px;top:333px;width:25px;height:15px;"><span>45</span></div><div class="hr" style="left:928px;top:348px;width:29px;height:60px;"><span>13</span></div><div class="mn" style="left:958px;top:348px;width:25px;height:15px;"><span>00</span></div><div class="mn" style="left:958px;top:363px;width:25px;height:15px;"><span>15</span></div><div class="mn" style="left:958px;top:378px;width:25px;height:15px;"><span>30</span></div><div class="mn" style="left:958px;top:393px;width:25px;height:15px;"><span>45</span></div><div class="hr" style="left:928px;top:408px;width:29px;height:60px;"><span>14</span></div><div class="mn" style="left:958px;top:408px;width:25px;height:15px;"><span>00</span></div><div class="mn" style="left:958px;top:423px;width:25px;height:15px;"><span>15</span></div><div class="mn" style="left:958px;top:438px;width:25px;height:15px;"><span>30</span></div><div class="mn" style="left:958px;top:453px;width:25px;height:15px;"><span>45</span></div><div class="hr" style="left:928px;top:468px;width:29px;height:60px;"><span>15</span></div><div class="mn" style="left:958px;top:468px;width:25px;height:15px;"><span>00</span></div><div class="mn" style="left:958px;top:483px;width:25px;height:15px;"><span>15</span></div><div class="mn" style="left:958px;top:498px;width:25px;height:15px;"><span>30</span></div><div class="mn" style="left:958px;top:513px;width:25px;height:15px;"><span>45</span></div><div class="hr" style="left:928px;top:528px;width:29px;height:60px;"><span>16</span></div><div class="mn" style="left:958px;top:528px;width:25px;height:15px;"><span>00</span></div><div class="mn" style="left:958px;top:543px;width:25px;height:15px;"><span>15</span></div><div class="mn" style="left:958px;top:558px;width:25px;height:15px;"><span>30</span></div><div class="mn" style="left:958px;top:573px;width:25px;height:15px;"><span>45</span></div><div class="hr" style="left:928px;top:588px;width:29px;height:60px;"><span>17</span></div><div class="mn" style="left:958px;top:588px;width:25px;height:15px;"><span>00</span></div><div class="mn" style="left:958px;top:603px;width:25px;height:15px;"><span>15</span></div><div class="mn" style="left:958px;top:618px;width:25px;height:15px;"><span>30</span></div><div class="mn" style="left:958px;top:633px;width:25px;height:15px;"><span>45</span></div><div class="hr" style="left:928px;top:648px;width:29px;height:60px;"><span>18</span></div><div class="mn" style="left:958px;top:648px;width:25px;height:15px;"><span>00</span></div><div class="mn" style="left:958px;top:663px;width:25px;height:15px;"><span>15</span></div><div class="mn" style="left:958px;top:678px;width:25px;height:15px;"><span>30</span></div><div class="mn" style="left:958px;top:693px;width:25px;height:15px;"><span>45</span></div><div class="dn" style="left:1158px;top:0px;width:221px;height:16px;background:#f4ecc6">Суббота</div><div class="dd" style="left:1158px;top:16px;width:221px;height:18px;border:1px dotted #000;background:#fff">28 июня 2025 г.</div><div style="left:1158px;top:48px;width:221px;height:670px;background:linear-gradient(90deg,#b3ac86 0 1px,transparent 1px 31px,#b3ac86 31px 32px,transparent 32px 56px,#b3ac86 56px 57px,transparent 57px 220px,#b3ac86 220px 221px),linear-gradient(180deg,#b3ac86 0 1px,transparent 1px) 0 0/100% 60px,linear-gradient(180deg,#b3ac86 0 1px,transparent 1px) 32px 0/189px 15px repeat-y,#ffffdd"></div><div class="hr" style="left:1159px;top:48px;width:30px;height:60px;"><span>8</span></div><div class="mn" style="left:1190px;top:48px;width:24px;height:15px;"><span>00</span></div><div class="mn" style="left:1190px;top:63px;width:24px;height:15px;"><span>15</span></div><div class="mn" style="left:1190px;top:78px;width:24px;height:15px;"><span>30</span></div><div class="mn" style="left:1190px;top:93px;width:24px;height:15px;"><span>45</span></div><div class="hr" style="left:1159px;top:108px;width:30px;height:60px;"><span>9</span></div><div class="mn" style="left:1190px;top:108px;width:24px;height:15px;"><span>00</span></div><div class="mn" style="left:1190px;top:123px;width:24px;height:15px;"><span>15</span></div><div class="mn" style="left:1190px;top:138px;width:24px;height:15px;"><span>30</span></div><div class="mn" style="left:1190px;top:153px;width:24px;height:15px;"><span>45</span></div><div class="hr" style="left:1159px;top:168px;width:30px;height:60px;"><span>10</span></div><div class="mn" style="left:1190px;top:168px;width:24px;height:15px;"><span>00</span></div><div class="mn" style="left:1190px;top:183px;width:24px;height:15px;"><span>15</span></div><div class="mn" style="left:1190px;top:198px;width:24px;height:15px;"><span>30</span></div><div class="mn" style="left:1190px;top:213px;width:24px;height:15px;"><span>45</span></div><div class="hr" style="left:1159px;top:228px;width:30px;height:60px;"><span>11</span></div><div class="mn" style="left:1190px;top:228px;width:24px;height:15px;"><span>00</span></div><div class="mn" style="left:1190px;top:243px;width:24px;height:15px;"><span>15</span></div><div class="mn" style="left:1190px;top:258px;width:24px;height:15px;"><span>30</span></div><div class="mn" style="left:1190px;top:273px;width:24px;height:15px;"><span>45</span></div><div class="hr" style="left:1159px;top:288px;width:30px;height:60px;"><span>12</span></div><div class="mn" style="left:1190px;top:288px;width:24px;height:15px;"><span>00</span></div><div class="mn" style="left:1190px;top:303px;width:24px;height:15px;"><span>15</span></div><div class="mn" style="left:1190px;top:318px;width:24px;height:15px;"><span>30</span></div><div class="mn" style="left:1190px;top:333px;width:24px;height:15px;"><span>45</span></div><div class="hr" style="left:1159px;top:348px;width:30px;height:60px;"><span>13</span></div><div class="mn" style="left:1190px;top:348px;width:24px;height:15px;"><span>00</span></div><div class="mn" style="left:1190px;top:363px;width:24px;height:15px;"><span>15</span></div><div class="mn" style="left:1190px;top:378px;width:24px;height:15px;"><span>30</span></div><div class="mn" style="left:1190px;top:393px;width:24px;height:15px;"><span>45</span></div><div class="hr" style="left:1159px;top:408px;width:30px;height:60px;"><span>14</span></div><div class="mn" style="left:1190px;top:408px;width:24px;height:15px;"><span>00</span></div><div class="mn" style="left:1190px;top:423px;width:24px;height:15px;"><span>15</span></div><div class="mn" style="left:1190px;top:438px;width:24px;height:15px;"><span>30</span></div><div class="mn" style="left:1190px;top:453px;width:24px;height:15px;"><span>45</span></div><div class="hr" style="left:1159px;top:468px;width:30px;height:60px;"><span>15</span></div><div class="mn" style="left:1190px;top:468px;width:24px;height:15px;"><span>00</span></div><div class="mn" style="left:1190px;top:483px;width:24px;height:15px;"><span>15</span></div><div class="mn" style="left:1190px;top:498px;width:24px;height:15px;"><span>30</span></div><div class="mn" style="left:1190px;top:513px;width:24px;height:15px;"><span>45</span></div><div class="hr" style="left:1159px;top:528px;width:30px;height:60px;"><span>16</span></div><div class="mn" style="left:1190px;top:528px;width:24px;height:15px;"><span>00</span></div><div class="mn" style="left:1190px;top:543px;width:24px;height:15px;"><span>15</span></div><div class="mn" style="left:1190px;top:558px;width:24px;height:15px;"><span>30</span></div><div class="mn" style="left:1190px;top:573px;width:24px;height:15px;"><span>45</span></div><div class="hr" style="left:1159px;top:588px;width:30px;height:60px;"><span>17</span></div><div class="mn" style="left:1190px;top:588px;width:24px;height:15px;"><span>00</span></div><div class="mn" style="left:1190px;top:603px;width:24px;height:15px;"><span>15</span></div><div class="mn" style="left:1190px;top:618px;width:24px;height:15px;"><span>30</span></div><div class="mn" style="left:1190px;top:633px;width:24px;height:15px;"><span>45</span></div><div class="hr" style="left:1159px;top:648px;width:30px;height:60px;"><span>18</span></div><div class="mn" style="left:1190px;top:648px;width:24px;height:15px;"><span>00</span></div><div class="mn" style="left:1190px;top:663px;width:24px;height:15px;"><span>15</span></div><div class="mn" style="left:1190px;top:678px;width:24px;height:15px;"><span>30</span></div><div class="mn" style="left:1190px;top:693px;width:24px;height:15px;"><span>45</span></div><div class="dn" style="left:1390px;top:0px;width:221px;height:16px;background:#f4ecc6">Воскресенье</div><div class="dd" style="left:1390px;top:16px;width:221px;height:18px;border:1px dotted #000;background:#fff">29 июня 2025 г.</div><div style="left:1390px;top:48px;width:221px;height:670px;background:linear-gradient(90deg,#b3ac86 0 1px,transparent 1px 31px,#b3ac86 31px 32px,transparent 32px 56px,#b3ac86 56px 57px,transparent 57px 220px,#b3ac86 220px 221px),linear-gradient(180deg,#b3ac86 0 1px,transparent 1px) 0 0/100% 60px,linear-gradient(180deg,#b3ac86 0 1px,transparent 1px) 32px 0/189px 15px repeat-y,#ffffdd"></div><div class="hr" style="left:1391px;top:48px;width:30px;height:60px;"><span>8</span></div><div class="mn" style="left:1422px;top:48px;width:24px;height:15px;"><span>00</span></div><div class="mn" style="left:1422px;top:63px;width:24px;height:15px;"><span>15</span></div><div class="mn" style="left:1422px;top:78px;width:24px;height:15px;"><span>30</span></div><div class="mn" style="left:1422px;top:93px;width:24px;height:15px;"><span>45</span></div><div class="hr" style="left:1391px;top:108px;width:30px;height:60px;"><span>9</span></div><div class="mn" style="left:1422px;top:108px;width:24px;height:15px;"><span>00</span></div><div class="mn" style="left:1422px;top:123px;width:24px;height:15px;"><span>15</span></div><div class="mn" style="left:1422px;top:138px;width:24px;height:15px;"><span>30</span></div><div class="mn" style="left:1422px;top:153px;width:24px;height:15px;"><span>45</span></div><div class="hr" style="left:1391px;top:168px;width:30px;height:60px;"><span>10</span></div><div class="mn" style="left:1422px;top:168px;width:24px;height:15px;"><span>00</span></div><div class="mn" style="left:1422px;top:183px;width:24px;height:15px;"><span>15</span></div><div class="mn" style="left:1422px;top:198px;width:24px;height:15px;"><span>30</span></div><div class="mn" style="left:1422px;top:213px;width:24px;height:15px;"><span>45</span></div><div class="hr" style="left:1391px;top:228px;width:30px;height:60px;"><span>11</span></div><div class="mn" style="left:1422px;top:228px;width:24px;height:15px;"><span>00</span></div><div class="mn" style="left:1422px;top:243px;width:24px;height:15px;"><span>15</span></div><div class="mn" style="left:1422px;top:258px;width:24px;height:15px;"><span>30</span></div><div class="mn" style="left:1422px;top:273px;width:24px;height:15px;"><span>45</span></div><div class="hr" style="left:1391px;top:288px;width:30px;height:60px;"><span>12</span></div><div class="mn" style="left:1422px;top:288px;width:24px;height:15px;"><span>00</span></div><div class="mn" style="left:1422px;top:303px;width:24px;height:15px;"><span>15</span></div><div class="mn" style="left:1422px;top:318px;width:24px;height:15px;"><span>30</span></div><div class="mn" style="left:1422px;top:333px;width:24px;height:15px;"><span>45</span></div><div class="hr" style="left:1391px;top:348px;width:30px;height:60px;"><span>13</span></div><div class="mn" style="left:1422px;top:348px;width:24px;height:15px;"><span>00</span></div><div class="mn" style="left:1422px;top:363px;width:24px;height:15px;"><span>15</span></div><div class="mn" style="left:1422px;top:378px;width:24px;height:15px;"><span>30</span></div><div class="mn" style="left:1422px;top:393px;width:24px;height:15px;"><span>45</span></div><div class="hr" style="left:1391px;top:408px;width:30px;height:60px;"><span>14</span></div><div class="mn" style="left:1422px;top:408px;width:24px;height:15px;"><span>00</span></div><div class="mn" style="left:1422px;top:423px;width:24px;height:15px;"><span>15</span></div><div class="mn" style="left:1422px;top:438px;width:24px;height:15px;"><span>30</span></div><div class="mn" style="left:1422px;top:453px;width:24px;height:15px;"><span>45</span></div><div class="hr" style="left:1391px;top:468px;width:30px;height:60px;"><span>15</span></div><div class="mn" style="left:1422px;top:468px;width:24px;height:15px;"><span>00</span></div><div class="mn" style="left:1422px;top:483px;width:24px;height:15px;"><span>15</span></div><div class="mn" style="left:1422px;top:498px;width:24px;height:15px;"><span>30</span></div><div class="mn" style="left:1422px;top:513px;width:24px;height:15px;"><span>45</span></div><div class="hr" style="left:1391px;top:528px;width:30px;height:60px;"><span>16</span></div><div class="mn" style="left:1422px;top:528px;width:24px;height:15px;"><span>00</span></div><div class="mn" style="left:1422px;top:543px;width:24px;height:15px;"><span>15</span></div><div class="mn" style="left:1422px;top:558px;width:24px;height:15px;"><span>30</span></div><div class="mn" style="left:1422px;top:573px;width:24px;height:15px;"><span>45</span></div><div class="hr" style="left:1391px;top:588px;width:30px;height:60px;"><span>17</span></div><div class="mn" style="left:1422px;top:588px;width:24px;height:15px;"><span>00</span></div><div class="mn" style="left:1422px;top:603px;width:24px;height:15px;"><span>15</span></div><div class="mn" style="left:1422px;top:618px;width:24px;height:15px;"><span>30</span></div><div class="mn" style="left:1422px;top:633px;width:24px;height:15px;"><span>45</span></div><div class="hr" style="left:1391px;top:648px;width:30px;height:60px;"><span>18</span></div><div class="mn" style="left:1422px;top:648px;width:24px;height:15px;"><span>00</span></div><div class="mn" style="left:1422px;top:663px;width:24px;height:15px;"><span>15</span></div><div class="mn" style="left:1422px;top:678px;width:24px;height:15px;"><span>30</span></div><div class="mn" style="left:1422px;top:693px;width:24px;height:15px;"><span>45</span></div></div><div style="left:1473px;top:197px;width:17px;height:680px;border:1px solid #b3ac86;background:#f9f8f0"></div><div style="left:1474px;top:198px;width:15px;height:20px;background:linear-gradient(135deg,#fdfcf6 0%,#f6f3e3 50%,#e9e3c6 100%)"></div><div style="left:1474px;top:218px;width:15px;height:1px;background:#b3ac86"></div><svg style="left:1474px;top:198px;" width="15" height="20" viewBox="0 0 15 20"><path d="M7.5 6 L11 13 H4 Z" fill="#c9c7b8"/></svg><div style="left:1474px;top:219px;width:15px;height:553px;background:linear-gradient(90deg,#fbf9ee 0%,#f2eed9 45%,#e4ddb9 100%)"></div><div style="left:1474px;top:772px;width:15px;height:1px;background:#b3ac86"></div><svg style="left:1478px;top:492px;" width="8" height="8" viewBox="0 0 8 8"><circle cx="3.5" cy="3.5" r="2.6" fill="#c4c2b6"/><circle cx="4.3" cy="4.3" r="2" fill="#f3efdc"/></svg><div style="left:1474px;top:855px;width:15px;height:1px;background:#b3ac86"></div><div style="left:1474px;top:856px;width:15px;height:20px;background:linear-gradient(135deg,#fdfcf6 0%,#f6f3e3 50%,#e9e3c6 100%)"></div><svg style="left:1474px;top:856px;" width="15" height="20" viewBox="0 0 15 20"><defs><linearGradient id="ga" x1="0" y1="0" x2="1" y2="1"><stop offset="0" stop-color="#6e6e7c"/><stop offset="1" stop-color="#b9b7b0"/></linearGradient></defs><path d="M4 7 H11 L7.5 14 Z" fill="url(#ga)"/></svg><div style="left:25px;top:876px;width:1449px;height:17px;border:1px solid #b3ac86;background:#f9f8f0"></div><div style="left:26px;top:877px;width:21px;height:15px;background:linear-gradient(135deg,#fdfcf6 0%,#f6f3e3 50%,#e9e3c6 100%)"></div><div style="left:47px;top:877px;width:1px;height:15px;background:#b3ac86"></div><svg style="left:26px;top:877px;" width="21" height="15" viewBox="0 0 21 15"><path d="M7 7.5 L14 4 V11 Z" fill="#c9c7b8"/></svg><div style="left:48px;top:877px;width:1250px;height:15px;background:linear-gradient(180deg,#fbf9ee 0%,#f2eed9 45%,#e4ddb9 100%)"></div><div style="left:1298px;top:877px;width:1px;height:15px;background:#b3ac86"></div><svg style="left:668px;top:880px;" width="8" height="8" viewBox="0 0 8 8"><circle cx="3.5" cy="3.5" r="2.6" fill="#c4c2b6"/><circle cx="4.3" cy="4.3" r="2" fill="#f3efdc"/></svg><div style="left:1452px;top:877px;width:1px;height:15px;background:#b3ac86"></div><div style="left:1453px;top:877px;width:20px;height:15px;background:linear-gradient(135deg,#fdfcf6 0%,#f6f3e3 50%,#e9e3c6 100%)"></div><svg style="left:1453px;top:877px;" width="20" height="15" viewBox="0 0 20 15"><path d="M14 7.5 L7 4 V11 Z" fill="url(#ga)"/></svg><div style="left:1474px;top:877px;width:15px;height:15px;background:#fbfaf1"></div><div style="left:10px;top:902px;width:172px;height:20px;background:#b4cce8;border:1px solid #b3ac86"></div><svg style="left:11px;top:903px;" width="18" height="18" viewBox="0 0 18 18"><path d="M7.6 5.6 L11.6 1.4 L15.6 5.6 L11.6 9.8 Z" fill="#ffe45a" stroke="#f0c83c" stroke-width=".7"/><rect x="1.2" y="9.4" width="8.6" height="6" rx="1.8" fill="#a6d8f6" stroke="#3a6a9c" stroke-width="1.1"/><path d="M5.5 5.2 V11 M5.5 5.2 H8" fill="none" stroke="#111" stroke-width="1.1" stroke-dasharray="1.2 1"/><path d="M3.2 10.6 H7.8 L5.5 13.4 Z" fill="#111"/></svg><span class="t" style="left:29px;top:906.84px;font-size:12px;line-height:12px;color:#222a50;transform:scaleX(0.9158);">Органайзер</span><div style="left:9px;top:924px;width:1392px;height:19px;border:1px solid #e4dfc6"></div><span class="tw"><span class="t" style="left:13.2px;top:927.84px;font-size:12px;line-height:12px;color:#3a2c00;transform:scaleX(0.8872);">Для</span> <span class="t" style="left:36.8px;top:927.84px;font-size:12px;line-height:12px;color:#3a2c00;transform:scaleX(0.8658);">получения</span> <span class="t" style="left:91.6px;top:927.84px;font-size:12px;line-height:12px;color:#3a2c00;transform:scaleX(0.9635);">подсказки</span> <span class="t" style="left:148.9px;top:927.84px;font-size:12px;line-height:12px;color:#3a2c00;transform:scaleX(0.9042);">нажмите</span> <span class="t" style="left:197.2px;top:927.84px;font-size:12px;line-height:12px;color:#3a2c00;transform:scaleX(0.7706);">F1</span></span><div style="left:1406px;top:924px;width:29px;height:19px;border:1px solid #e2ddc4"></div><span class="t" style="left:1409px;top:927.84px;font-size:12px;line-height:12px;color:#b7a778;transform:scaleX(0.8304);">CAP</span><div style="left:1440px;top:924px;width:33px;height:19px;border:1px solid #e2ddc4"></div><span class="t" style="left:1443.5px;top:927.84px;font-size:12px;line-height:12px;color:#2a2030;transform:scaleX(0.8782);">NUM</span><svg style="left:1488px;top:929px;" width="15" height="15" viewBox="0 0 15 15"><path d="M15 1 L1 15 M15 5 L5 15 M15 9 L9 15" stroke="#b3ab84" stroke-width="1.5"/></svg></body></html>
